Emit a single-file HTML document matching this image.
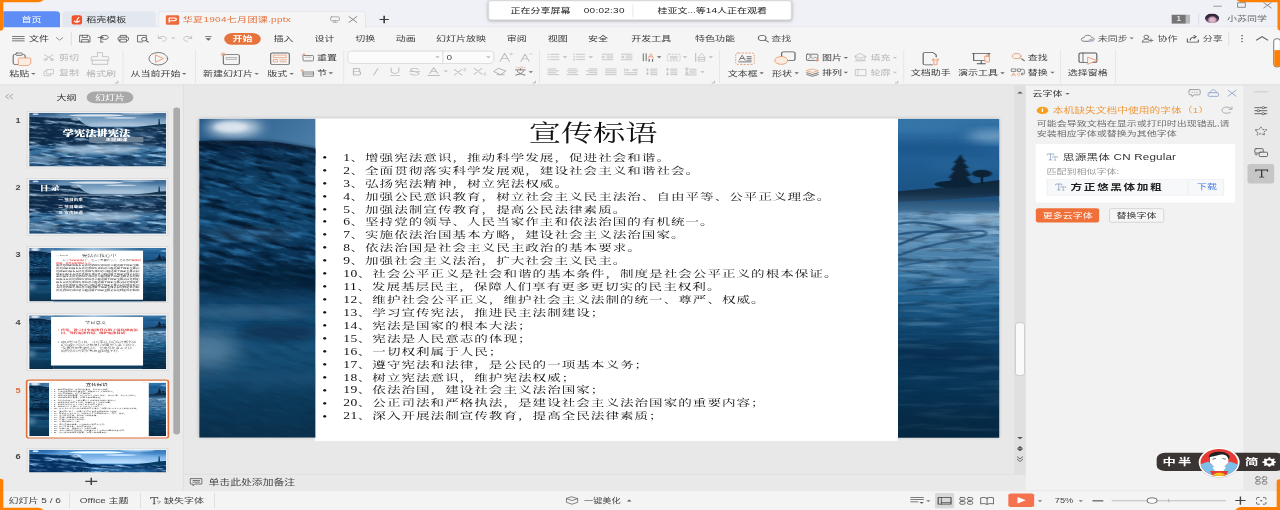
<!DOCTYPE html>
<html lang="zh-CN"><head><meta charset="utf-8"><title>华夏1904七月团课.pptx - WPS 演示</title>
<style>
html,body{margin:0;padding:0;background:#f0f0f0;overflow:hidden;}
body{width:1280px;height:510px;position:relative;}
#w{text-spacing-trim:space-all;position:absolute;left:0;top:0;width:1536px;height:864px;transform-origin:0 0;transform:scale(0.833333,0.590278);overflow:hidden;font-family:"Liberation Sans","Noto Sans CJK SC",sans-serif;font-size:12px;background:#f0f0f0;}
#w div,#w svg{position:absolute;box-sizing:border-box;}
#w svg{overflow:visible;text-rendering:geometricPrecision;}
.t{white-space:nowrap;}
.s{white-space:nowrap;font-family:"Liberation Serif","Noto Serif CJK SC",serif;}
</style></head><body><div id="w">
<div style="left:0.0px;top:0.0px;width:1536.0px;height:46.08px;background:#f0f1f6;"></div>
<div style="left:0.0px;top:45.06px;width:1536.0px;height:1.19px;background:#dde2ec;"></div>
<div style="left:0.0px;top:46.08px;width:1536.0px;height:96.56px;background:#f5f5f5;"></div>
<div style="left:0.0px;top:142.64px;width:1536.0px;height:4.75px;background:linear-gradient(#dcdcdc,#e9e9e9);"></div>
<div style="left:0.0px;top:144.85px;width:219.96px;height:686.28px;background:#ebebeb;"></div>
<div style="left:219.6px;top:144.85px;width:0.96px;height:686.28px;background:#d9d9d9;"></div>
<div style="left:220.56px;top:144.85px;width:996.24px;height:658.16px;background:#e8e8e8;"></div>
<div style="left:220.56px;top:803.35px;width:1010.04px;height:27.78px;background:#e9e9e9;border-top:1px solid #dadada;"></div>
<div style="left:1216.8px;top:144.85px;width:13.8px;height:658.16px;background:#e0e0e0;"></div>
<div style="left:1217.52px;top:546.18px;width:12.48px;height:91.32px;background:#fafafa;border:1px solid #bdbdbd;border-radius:6px;"></div>
<div style="left:1230.6px;top:144.85px;width:261.24px;height:686.28px;background:#f2f2f2;"></div>
<div style="left:1491.84px;top:144.85px;width:44.16px;height:686.28px;background:#e9e9e9;"></div>
<div style="left:0.0px;top:831.13px;width:1536.0px;height:32.87px;background:#f4f4f4;border-top:1px solid #e2e2e2;"></div>
<div style="left:3.72px;top:18.64px;width:68.28px;height:27.44px;background:#5e8df5;border-radius:0 5px 0 0;"></div>
<div class="t" style="top:24.37px;line-height:18.0px;font-size:12px;color:#fff;left:37.8px;transform:translateX(-50%);">首页</div>
<div style="left:74.52px;top:19.14px;width:112.68px;height:26.94px;background:#e3e7f0;border-radius:5px 5px 0 0;"></div>
<div class="t" style="top:24.54px;line-height:18.0px;font-size:12px;color:#333;left:103.56px;">稻壳模板</div>
<div style="left:190.2px;top:19.14px;width:248.4px;height:27.62px;background:#f5f5f5;border:1px solid #d9dde6;border-bottom:none;border-radius:5px 5px 0 0;"></div>
<div class="t" style="top:24.88px;line-height:18.0px;font-size:12px;color:#e5703a;letter-spacing:0.35px;left:219.36px;">华夏1904七月团课.pptx</div>
<div style="left:585.6px;top:1.19px;width:363.96px;height:32.69px;background:#fff;border:1px solid #e0e0e0;border-radius:4px;box-shadow:0 1px 5px rgba(0,0,0,.3);"></div>
<div class="t" style="top:8.79px;line-height:18.0px;font-size:12px;color:#1a1a1a;left:612.6px;">正在分享屏幕</div>
<div class="t" style="top:8.79px;line-height:18.0px;font-size:12px;color:#1a1a1a;letter-spacing:0.3px;left:700.56px;">00:02:30</div>
<div style="left:758.64px;top:6.78px;width:0.84px;height:22.02px;background:#e4e4e4;"></div>
<div class="t" style="top:8.79px;line-height:18.0px;font-size:12px;color:#1a1a1a;left:789.0px;">桂亚文...等14人正在观看</div>
<div style="left:1406.4px;top:25.07px;width:16.56px;height:15.08px;background:#757575;"></div>
<div class="t" style="top:24.45px;line-height:16.5px;font-size:11px;color:#fff;left:1414.68px;transform:translateX(-50%);">1</div>
<div style="left:1423.44px;top:25.07px;width:4.08px;height:15.08px;background:#b9b9b9;"></div>
<div style="left:1437.72px;top:22.02px;width:0.84px;height:19.49px;background:#d8dbe3;"></div>
<div style="left:1446.24px;top:23.21px;width:16.92px;height:16.26px;background:radial-gradient(ellipse 34% 40% at 52% 66%,#e3c3d1 0,#d3a9bd 70%,rgba(211,169,189,0) 100%),linear-gradient(#2c2233 0,#3a2b45 45%,#5d4566 70%,#8a6f93 100%);border-radius:50%;"></div>
<div class="t" style="top:23.02px;line-height:18.0px;font-size:12px;color:#6a6a6a;left:1472.4px;">小苏同学</div>
<div class="t" style="top:56.9px;line-height:18.0px;font-size:12px;color:#3c3c3c;left:34.8px;">文件</div>
<div style="left:84.6px;top:54.21px;width:0.96px;height:22.87px;background:#d9d9d9;"></div>
<div style="left:269.4px;top:55.57px;width:43.56px;height:20.5px;background:#e6733c;border-radius:12px;"></div>
<div class="t" style="top:56.9px;line-height:18.0px;font-size:12px;color:#fff;font-weight:700;left:291.12px;transform:translateX(-50%);">开始</div>
<div class="t" style="top:56.9px;line-height:18.0px;font-size:12px;color:#3c3c3c;left:328.2px;">插入</div>
<div class="t" style="top:56.9px;line-height:18.0px;font-size:12px;color:#3c3c3c;left:377.4px;">设计</div>
<div class="t" style="top:56.9px;line-height:18.0px;font-size:12px;color:#3c3c3c;left:426.36px;">切换</div>
<div class="t" style="top:56.9px;line-height:18.0px;font-size:12px;color:#3c3c3c;left:474.96px;">动画</div>
<div class="t" style="top:56.9px;line-height:18.0px;font-size:12px;color:#3c3c3c;left:523.2px;">幻灯片放映</div>
<div class="t" style="top:56.9px;line-height:18.0px;font-size:12px;color:#3c3c3c;left:608.16px;">审阅</div>
<div class="t" style="top:56.9px;line-height:18.0px;font-size:12px;color:#3c3c3c;left:657.36px;">视图</div>
<div class="t" style="top:56.9px;line-height:18.0px;font-size:12px;color:#3c3c3c;left:705.6px;">安全</div>
<div class="t" style="top:56.9px;line-height:18.0px;font-size:12px;color:#3c3c3c;left:757.56px;">开发工具</div>
<div class="t" style="top:56.9px;line-height:18.0px;font-size:12px;color:#3c3c3c;left:834.0px;">特色功能</div>
<div class="t" style="top:56.9px;line-height:18.0px;font-size:12px;color:#555;left:925.56px;">查找</div>
<div class="t" style="top:56.9px;line-height:18.0px;font-size:12px;color:#555;left:1317.36px;">未同步</div>
<div class="t" style="top:56.9px;line-height:18.0px;font-size:12px;color:#555;left:1389.12px;">协作</div>
<div class="t" style="top:56.9px;line-height:18.0px;font-size:12px;color:#555;left:1443.36px;">分享</div>
<div style="left:1474.2px;top:54.21px;width:0.84px;height:22.87px;background:#dcdcdc;"></div>
<div class="t" style="top:115.01px;line-height:18.0px;font-size:12px;color:#3c3c3c;left:11.04px;">粘贴</div>
<div class="t" style="top:88.58px;line-height:18.0px;font-size:12px;color:#b4b4b4;left:70.8px;">剪切</div>
<div class="t" style="top:113.99px;line-height:18.0px;font-size:12px;color:#b4b4b4;left:70.8px;">复制</div>
<div class="t" style="top:115.01px;line-height:18.0px;font-size:12px;color:#b4b4b4;left:103.2px;">格式刷</div>
<div class="t" style="top:115.01px;line-height:18.0px;font-size:12px;color:#3c3c3c;left:156.72px;">从当前开始</div>
<div class="t" style="top:115.01px;line-height:18.0px;font-size:12px;color:#3c3c3c;left:243.6px;">新建幻灯片</div>
<div class="t" style="top:115.01px;line-height:18.0px;font-size:12px;color:#3c3c3c;left:320.64px;">版式</div>
<div class="t" style="top:88.58px;line-height:18.0px;font-size:12px;color:#3c3c3c;left:380.4px;">重置</div>
<div class="t" style="top:114.33px;line-height:18.0px;font-size:12px;color:#3c3c3c;left:380.4px;">节</div>
<div class="t" style="top:114.67px;line-height:18.0px;font-size:12px;color:#3c3c3c;left:873.36px;">文本框</div>
<div class="t" style="top:114.67px;line-height:18.0px;font-size:12px;color:#3c3c3c;left:926.4px;">形状</div>
<div class="t" style="top:88.58px;line-height:18.0px;font-size:12px;color:#3c3c3c;left:986.28px;">图片</div>
<div class="t" style="top:113.99px;line-height:18.0px;font-size:12px;color:#3c3c3c;left:986.28px;">排列</div>
<div class="t" style="top:88.58px;line-height:18.0px;font-size:12px;color:#b4b4b4;left:1044.72px;">填充</div>
<div class="t" style="top:113.99px;line-height:18.0px;font-size:12px;color:#b4b4b4;left:1044.72px;">轮廓</div>
<div class="t" style="top:114.33px;line-height:18.0px;font-size:12px;color:#3c3c3c;left:1092.96px;">文档助手</div>
<div class="t" style="top:114.33px;line-height:18.0px;font-size:12px;color:#3c3c3c;left:1149.72px;">演示工具</div>
<div class="t" style="top:88.92px;line-height:18.0px;font-size:12px;color:#3c3c3c;left:1233.36px;">查找</div>
<div class="t" style="top:113.99px;line-height:18.0px;font-size:12px;color:#3c3c3c;left:1233.36px;">替换</div>
<div class="t" style="top:114.33px;line-height:18.0px;font-size:12px;color:#3c3c3c;left:1281.36px;">选择窗格</div>
<div style="left:146.94px;top:84.71px;width:0.84px;height:55.9px;background:#e3e3e3;"></div>
<div style="left:233.82px;top:84.71px;width:0.84px;height:55.9px;background:#e3e3e3;"></div>
<div style="left:411.54px;top:84.71px;width:0.84px;height:55.9px;background:#e3e3e3;"></div>
<div style="left:647.1px;top:84.71px;width:0.84px;height:55.9px;background:#e3e3e3;"></div>
<div style="left:863.34px;top:84.71px;width:0.84px;height:55.9px;background:#e3e3e3;"></div>
<div style="left:1084.14px;top:84.71px;width:0.84px;height:55.9px;background:#e3e3e3;"></div>
<div style="left:1271.94px;top:84.71px;width:0.84px;height:55.9px;background:#e3e3e3;"></div>
<div style="left:1338.18px;top:84.71px;width:0.84px;height:55.9px;background:#e3e3e3;"></div>
<div style="left:416.64px;top:85.55px;width:176.64px;height:22.2px;background:#fbfbfb;border:1px solid #d3d3d3;border-radius:6px;"></div>
<div style="left:531.36px;top:86.06px;width:0.84px;height:21.35px;background:#d3d3d3;"></div>
<div class="t" style="top:87.9px;line-height:18.0px;font-size:12px;color:#444;left:535.68px;">0</div>
<div class="t" style="top:156.85px;line-height:18.0px;font-size:12px;color:#333;left:67.8px;">大纲</div>
<div style="left:104.16px;top:155.01px;width:55.92px;height:19.82px;background:#a9a9a9;border-radius:12px;"></div>
<div class="t" style="top:156.18px;line-height:18.0px;font-size:12px;color:#fff;left:132.12px;transform:translateX(-50%);">幻灯片</div>
<div style="left:208.32px;top:182.12px;width:7.2px;height:553.97px;background:#ababab;border-radius:4px;"></div>
<div class="t" style="top:807.49px;line-height:19.5px;font-size:13px;color:#444;left:250.2px;">单击此处添加备注</div>
<div class="t" style="top:838.91px;line-height:18.0px;font-size:12px;color:#444;left:10.32px;">幻灯片 5 / 6</div>
<div class="t" style="top:838.91px;line-height:18.0px;font-size:12px;color:#444;left:95.76px;">Office 主题</div>
<div class="t" style="top:838.91px;line-height:18.0px;font-size:12px;color:#444;left:196.68px;">缺失字体</div>
<div style="left:83.46px;top:835.2px;width:0.84px;height:26.26px;background:#dcdcdc;"></div>
<div style="left:167.7px;top:835.2px;width:0.84px;height:26.26px;background:#dcdcdc;"></div>
<div style="left:256.74px;top:835.2px;width:0.84px;height:26.26px;background:#dcdcdc;"></div>
<div class="t" style="top:840.16px;line-height:16.5px;font-size:11px;color:#444;left:700.8px;">一键美化</div>
<div class="t" style="top:839.83px;line-height:16.5px;font-size:11px;color:#444;left:1265.76px;">75%</div>
<div style="left:1122.24px;top:834.86px;width:22.8px;height:25.75px;background:#d8d8d8;border-radius:2px;"></div>
<div style="left:1209.84px;top:836.39px;width:30.96px;height:22.53px;background:#f6714e;border-radius:3px;"></div>
<div style="left:1333.68px;top:847.74px;width:137.04px;height:1.01px;background:#9a9a9a;"></div>
<div style="left:1401.6px;top:845.03px;width:0.84px;height:6.43px;background:#aaa;"></div>
<div style="left:1376.4px;top:842.82px;width:12.24px;height:10.68px;background:#fafafa;border:1.4px solid #555;border-radius:50%;"></div>
<div class="t" style="top:149.57px;line-height:18.0px;font-size:12px;color:#333;left:1238.88px;">云字体</div>
<div style="left:1244.04px;top:180.59px;width:13.8px;height:12.37px;background:#f6a01e;border-radius:50%;"></div>
<div class="t" style="top:179.36px;line-height:15.0px;font-size:10px;color:#fff;font-weight:700;left:1250.94px;transform:translateX(-50%);">i</div>
<div class="t" style="top:177.35px;line-height:19.35px;font-size:12.9px;color:#f09a3e;left:1263.36px;">本机缺失文档中使用的字体（1）</div>
<div class="t" style="top:201.41px;line-height:18.0px;font-size:12px;color:#6e6e6e;left:1244.04px;">可能会导致文档在显示或打印时出现错乱,请</div>
<div class="t" style="top:217.0px;line-height:18.0px;font-size:12px;color:#6e6e6e;left:1244.04px;">安装相应字体或替换为其他字体</div>
<div style="left:1243.32px;top:244.46px;width:238.44px;height:98.43px;background:#fff;"></div>
<div class="t" style="top:256.49px;line-height:21.0px;font-size:14px;color:#333;letter-spacing:0.2px;left:1275.36px;">思源黑体 CN Regular</div>
<div class="t" style="top:281.03px;line-height:18.0px;font-size:12px;color:#9a9a9a;left:1255.8px;">匹配到相似字体:</div>
<div style="left:1255.8px;top:304.09px;width:213.48px;height:26.6px;background:#f7f8fa;border:1px solid #ececf0;"></div>
<div style="left:1425.36px;top:304.94px;width:0.84px;height:25.07px;background:#ececf0;"></div>
<div class="t" style="top:307.15px;line-height:21.0px;font-size:14px;color:#222;font-weight:700;letter-spacing:1.9px;left:1284.72px;">方正悠黑体加粗</div>
<div class="t" style="top:308.31px;line-height:18.0px;font-size:12px;color:#4a7fe0;left:1436.52px;">下载</div>
<div style="left:1243.32px;top:353.05px;width:76.08px;height:24.06px;background:#f0703a;border-radius:3px;"></div>
<div class="t" style="top:356.42px;line-height:18.0px;font-size:12px;color:#fff;left:1281.36px;transform:translateX(-50%);">更多云字体</div>
<div style="left:1331.04px;top:353.05px;width:65.52px;height:24.06px;background:#f6f6f6;border:1px solid #c9c9c9;border-radius:3px;"></div>
<div class="t" style="top:356.42px;line-height:18.0px;font-size:12px;color:#333;left:1363.8px;transform:translateX(-50%);">替换字体</div>
<div style="left:1496.76px;top:278.17px;width:32.64px;height:32.36px;background:#c6c6c6;border-radius:4px;"></div>
<div style="left:1388.16px;top:767.44px;width:152.64px;height:30.15px;background:#3a3533;border-radius:10px;"></div>
<div class="t" style="top:770.34px;line-height:24.0px;font-size:16px;color:#fff;font-weight:700;letter-spacing:2.6px;left:1395.0px;">中半</div>
<div class="t" style="top:770.34px;line-height:24.0px;font-size:16px;color:#fff;font-weight:700;left:1494.0px;">简</div>
<div style="left:-4.8px;top:-6.78px;width:57.36px;height:10.51px;background:#ff8000;border-radius:0 0 8px 0;"></div>
<div style="left:-4.8px;top:-6.78px;width:8.64px;height:58.28px;background:#ff8000;border-radius:0 0 4px 0;"></div>
<div style="left:1483.44px;top:-6.78px;width:57.36px;height:11.18px;background:#ff8000;border-radius:0 0 0 8px;"></div>
<div style="left:1532.64px;top:-6.78px;width:8.16px;height:58.28px;background:#ff8000;border-radius:0 0 0 4px;"></div>
<div style="left:-4.8px;top:810.8px;width:8.76px;height:59.98px;background:#ff8000;border-radius:0 4px 0 0;"></div>
<div style="left:-4.8px;top:860.27px;width:57.48px;height:10.51px;background:#ff8000;border-radius:0 8px 0 0;"></div>
<div style="left:1532.16px;top:811.65px;width:8.64px;height:59.13px;background:#ff8000;border-radius:4px 0 0 0;"></div>
<div style="left:1482.36px;top:858.58px;width:58.44px;height:12.2px;background:#ff8000;border-radius:8px 0 0 0;"></div>
<div style="left:1527.6px;top:65.05px;width:9.6px;height:49.3px;background:#fff;border:1.5px solid #444;border-radius:5px;overflow:hidden;"><div style="left:0;right:0;top:40%;bottom:0;background:#ff8000;width:100%"></div></div>
<div style="left:238.56px;top:200.58px;width:960.36px;height:540.6px;background:#fff;box-shadow:0 0 6px rgba(0,0,0,.28);"></div>
<div style="left:378.0px;top:200.58px;width:698.88px;height:546.36px;background:#fff;"></div>
<div class="s" style="top:198.06px;line-height:57.9px;font-size:38.6px;color:#111;left:711.72px;transform:translateX(-50%);">宣传标语</div>
<div class="s" style="top:254.92px;line-height:25.5px;font-size:17px;color:#111;left:386.76px;">•</div>
<div class="s" style="top:255.45px;line-height:24.45px;font-size:16.3px;color:#111;letter-spacing:1.2px;left:411.84px;"><span style="letter-spacing:0.6px">1</span>、增强宪法意识，推动科学发展，促进社会和谐。</div>
<div class="s" style="top:276.81px;line-height:25.5px;font-size:17px;color:#111;left:386.76px;">•</div>
<div class="s" style="top:277.33px;line-height:24.45px;font-size:16.3px;color:#111;letter-spacing:1.2px;left:411.84px;"><span style="letter-spacing:0.6px">2</span>、全面贯彻落实科学发展观，建设社会主义和谐社会。</div>
<div class="s" style="top:298.7px;line-height:25.5px;font-size:17px;color:#111;left:386.76px;">•</div>
<div class="s" style="top:299.22px;line-height:24.45px;font-size:16.3px;color:#111;letter-spacing:1.2px;left:411.84px;"><span style="letter-spacing:0.6px">3</span>、弘扬宪法精神，树立宪法权威。</div>
<div class="s" style="top:320.58px;line-height:25.5px;font-size:17px;color:#111;left:386.76px;">•</div>
<div class="s" style="top:321.1px;line-height:24.45px;font-size:16.3px;color:#111;letter-spacing:1.2px;left:411.84px;"><span style="letter-spacing:0.6px">4</span>、加强公民意识教育，树立社会主义民主法治、自由平等、公平正义理念。</div>
<div class="s" style="top:342.47px;line-height:25.5px;font-size:17px;color:#111;left:386.76px;">•</div>
<div class="s" style="top:343.0px;line-height:24.45px;font-size:16.3px;color:#111;letter-spacing:1.2px;left:411.84px;"><span style="letter-spacing:0.6px">5</span>、加强法制宣传教育，提高公民法律素质。</div>
<div class="s" style="top:364.36px;line-height:25.5px;font-size:17px;color:#111;left:386.76px;">•</div>
<div class="s" style="top:364.88px;line-height:24.45px;font-size:16.3px;color:#111;letter-spacing:1.2px;left:411.84px;"><span style="letter-spacing:0.6px">6</span>、坚持党的领导、人民当家作主和依法治国的有机统一。</div>
<div class="s" style="top:386.25px;line-height:25.5px;font-size:17px;color:#111;left:386.76px;">•</div>
<div class="s" style="top:386.77px;line-height:24.45px;font-size:16.3px;color:#111;letter-spacing:1.2px;left:411.84px;"><span style="letter-spacing:0.6px">7</span>、实施依法治国基本方略，建设社会主义法治国家。</div>
<div class="s" style="top:408.14px;line-height:25.5px;font-size:17px;color:#111;left:386.76px;">•</div>
<div class="s" style="top:408.66px;line-height:24.45px;font-size:16.3px;color:#111;letter-spacing:1.2px;left:411.84px;"><span style="letter-spacing:0.6px">8</span>、依法治国是社会主义民主政治的基本要求。</div>
<div class="s" style="top:430.02px;line-height:25.5px;font-size:17px;color:#111;left:386.76px;">•</div>
<div class="s" style="top:430.54px;line-height:24.45px;font-size:16.3px;color:#111;letter-spacing:1.2px;left:411.84px;"><span style="letter-spacing:0.6px">9</span>、加强社会主义法治，扩大社会主义民主。</div>
<div class="s" style="top:451.91px;line-height:25.5px;font-size:17px;color:#111;left:386.76px;">•</div>
<div class="s" style="top:452.44px;line-height:24.45px;font-size:16.3px;color:#111;letter-spacing:1.2px;left:411.84px;"><span style="letter-spacing:0.6px">10</span>、社会公平正义是社会和谐的基本条件，制度是社会公平正义的根本保证。</div>
<div class="s" style="top:473.8px;line-height:25.5px;font-size:17px;color:#111;left:386.76px;">•</div>
<div class="s" style="top:474.32px;line-height:24.45px;font-size:16.3px;color:#111;letter-spacing:1.2px;left:411.84px;"><span style="letter-spacing:0.6px">11</span>、发展基层民主，保障人们享有更多更切实的民主权利。</div>
<div class="s" style="top:495.69px;line-height:25.5px;font-size:17px;color:#111;left:386.76px;">•</div>
<div class="s" style="top:496.21px;line-height:24.45px;font-size:16.3px;color:#111;letter-spacing:1.2px;left:411.84px;"><span style="letter-spacing:0.6px">12</span>、维护社会公平正义，维护社会主义法制的统一、尊严、权威。</div>
<div class="s" style="top:517.58px;line-height:25.5px;font-size:17px;color:#111;left:386.76px;">•</div>
<div class="s" style="top:518.11px;line-height:24.45px;font-size:16.3px;color:#111;letter-spacing:1.2px;left:411.84px;"><span style="letter-spacing:0.6px">13</span>、学习宣传宪法，推进民主法制建设；</div>
<div class="s" style="top:539.46px;line-height:25.5px;font-size:17px;color:#111;left:386.76px;">•</div>
<div class="s" style="top:539.99px;line-height:24.45px;font-size:16.3px;color:#111;letter-spacing:1.2px;left:411.84px;"><span style="letter-spacing:0.6px">14</span>、宪法是国家的根本大法；</div>
<div class="s" style="top:561.35px;line-height:25.5px;font-size:17px;color:#111;left:386.76px;">•</div>
<div class="s" style="top:561.88px;line-height:24.45px;font-size:16.3px;color:#111;letter-spacing:1.2px;left:411.84px;"><span style="letter-spacing:0.6px">15</span>、宪法是人民意志的体现；</div>
<div class="s" style="top:583.24px;line-height:25.5px;font-size:17px;color:#111;left:386.76px;">•</div>
<div class="s" style="top:583.76px;line-height:24.45px;font-size:16.3px;color:#111;letter-spacing:1.2px;left:411.84px;"><span style="letter-spacing:0.6px">16</span>、一切权利属于人民；</div>
<div class="s" style="top:605.13px;line-height:25.5px;font-size:17px;color:#111;left:386.76px;">•</div>
<div class="s" style="top:605.65px;line-height:24.45px;font-size:16.3px;color:#111;letter-spacing:1.2px;left:411.84px;"><span style="letter-spacing:0.6px">17</span>、遵守宪法和法律，是公民的一项基本义务；</div>
<div class="s" style="top:627.02px;line-height:25.5px;font-size:17px;color:#111;left:386.76px;">•</div>
<div class="s" style="top:627.54px;line-height:24.45px;font-size:16.3px;color:#111;letter-spacing:1.2px;left:411.84px;"><span style="letter-spacing:0.6px">18</span>、树立宪法意识，维护宪法权威；</div>
<div class="s" style="top:648.9px;line-height:25.5px;font-size:17px;color:#111;left:386.76px;">•</div>
<div class="s" style="top:649.42px;line-height:24.45px;font-size:16.3px;color:#111;letter-spacing:1.2px;left:411.84px;"><span style="letter-spacing:0.6px">19</span>、依法治国，建设社会主义法治国家；</div>
<div class="s" style="top:670.79px;line-height:25.5px;font-size:17px;color:#111;left:386.76px;">•</div>
<div class="s" style="top:671.31px;line-height:24.45px;font-size:16.3px;color:#111;letter-spacing:1.2px;left:411.84px;"><span style="letter-spacing:0.6px">20</span>、公正司法和严格执法，是建设社会主义法治国家的重要内容；</div>
<div class="s" style="top:692.68px;line-height:25.5px;font-size:17px;color:#111;left:386.76px;">•</div>
<div class="s" style="top:693.2px;line-height:24.45px;font-size:16.3px;color:#111;letter-spacing:1.2px;left:411.84px;"><span style="letter-spacing:0.6px">21</span>、深入开展法制宣传教育，提高全民法律素质；</div>

<svg width="0" height="0" style="left:0;top:0"><defs>
<filter id="nzW" x="0" y="0" width="100%" height="100%" color-interpolation-filters="sRGB">
 <feTurbulence type="fractalNoise" baseFrequency="0.034 0.13" numOctaves="4" seed="7"/>
 <feColorMatrix type="matrix" values="0 0 0 0 0.2  0 0 0 0 0.5  0 0 0 0 0.72  3.4 0 0 0 -1.62"/>
 <feComposite in2="SourceGraphic" operator="in"/>
</filter>
<filter id="nzD" x="0" y="0" width="100%" height="100%" color-interpolation-filters="sRGB">
 <feTurbulence type="fractalNoise" baseFrequency="0.028 0.11" numOctaves="4" seed="23"/>
 <feColorMatrix type="matrix" values="0 0 0 0 0.01  0 0 0 0 0.08  0 0 0 0 0.16  -3.6 0 0 0 1.85"/>
 <feComposite in2="SourceGraphic" operator="in"/>
</filter>
<filter id="nzF" x="0" y="0" width="100%" height="100%" color-interpolation-filters="sRGB">
 <feTurbulence type="fractalNoise" baseFrequency="0.012 0.1" numOctaves="3" seed="11"/>
 <feColorMatrix type="matrix" values="0 0 0 0 0.72  0 0 0 0 0.86  0 0 0 0 0.96  3.5 0 0 0 -1.75"/>
 <feComposite in2="SourceGraphic" operator="in"/>
</filter>
<filter id="nzAW" x="0" y="0" width="100%" height="100%" color-interpolation-filters="sRGB">
 <feTurbulence type="fractalNoise" baseFrequency="0.009 0.04" numOctaves="4" seed="5"/>
 <feColorMatrix type="matrix" values="0 0 0 0 0.70  0 0 0 0 0.83  0 0 0 0 0.94  3.4 0 0 0 -1.62"/>
 <feComposite in2="SourceGraphic" operator="in"/>
</filter>
<filter id="nzAD" x="0" y="0" width="100%" height="100%" color-interpolation-filters="sRGB">
 <feTurbulence type="fractalNoise" baseFrequency="0.008 0.036" numOctaves="4" seed="31"/>
 <feColorMatrix type="matrix" values="0 0 0 0 0.04  0 0 0 0 0.15  0 0 0 0 0.27  -3.4 0 0 0 1.8"/>
 <feComposite in2="SourceGraphic" operator="in"/>
</filter>
<filter id="b8" x="-30%" y="-30%" width="160%" height="160%"><feGaussianBlur stdDeviation="8"/></filter>
<filter id="b14" x="-40%" y="-40%" width="180%" height="180%"><feGaussianBlur stdDeviation="14"/></filter>
<filter id="b3" x="-30%" y="-30%" width="160%" height="160%"><feGaussianBlur stdDeviation="3"/></filter>
<filter id="b1" x="-10%" y="-10%" width="120%" height="120%"><feGaussianBlur stdDeviation="1.2"/></filter>
<linearGradient id="gL" gradientUnits="userSpaceOnUse" x1="0" y1="0" x2="0" y2="540">
 <stop offset=".07" stop-color="#08223e"/><stop offset=".1" stop-color="#0b2d4e"/><stop offset=".16" stop-color="#0e3a5e"/>
 <stop offset=".26" stop-color="#10436a"/><stop offset=".35" stop-color="#0e3d62"/><stop offset=".43" stop-color="#0b3356"/>
 <stop offset=".48" stop-color="#062641"/><stop offset=".52" stop-color="#072945"/><stop offset=".57" stop-color="#0f4066"/><stop offset=".63" stop-color="#124a72"/>
 <stop offset=".71" stop-color="#165078"/><stop offset=".79" stop-color="#12476c"/><stop offset=".88" stop-color="#0c3a5a"/><stop offset="1" stop-color="#0a304c"/>
</linearGradient>
<linearGradient id="gLs" x1="0" y1="0" x2="1" y2="0.3">
 <stop offset="0" stop-color="#245888"/><stop offset="1" stop-color="#4f81aa"/>
</linearGradient>
<linearGradient id="gLm" gradientUnits="userSpaceOnUse" x1="0" y1="0" x2="0" y2="540">
 <stop offset="0" stop-color="#fff"/><stop offset=".42" stop-color="#fff"/><stop offset=".56" stop-color="#333"/><stop offset="1" stop-color="#1a1a1a"/>
</linearGradient>
<mask id="mkL" maskUnits="userSpaceOnUse" x="-200" y="-100" width="700" height="800"><rect x="-200" y="-100" width="700" height="800" fill="url(#gLm)"/></mask>
<linearGradient id="gRs" x1="0" y1="0" x2="0" y2="1">
 <stop offset="0" stop-color="#3373a5"/><stop offset=".3" stop-color="#24629a"/><stop offset=".75" stop-color="#1c5688"/><stop offset="1" stop-color="#1b4f7c"/>
</linearGradient>
<linearGradient id="gRw" gradientUnits="userSpaceOnUse" x1="0" y1="140" x2="0" y2="540">
 <stop offset="0" stop-color="#2c567a"/><stop offset=".035" stop-color="#3a6990"/><stop offset=".055" stop-color="#6595ba"/><stop offset=".15" stop-color="#5a8db4"/><stop offset=".28" stop-color="#417aa5"/>
 <stop offset=".4" stop-color="#22618f"/><stop offset=".52" stop-color="#124a74"/><stop offset=".68" stop-color="#0b3b60"/><stop offset=".85" stop-color="#07304f"/><stop offset="1" stop-color="#052741"/>
</linearGradient>
<linearGradient id="gRm" gradientUnits="userSpaceOnUse" x1="0" y1="140" x2="0" y2="540">
 <stop offset="0" stop-color="#fff"/><stop offset=".3" stop-color="#ddd"/><stop offset=".6" stop-color="#555"/><stop offset="1" stop-color="#2a2a2a"/>
</linearGradient>
<mask id="mkR" maskUnits="userSpaceOnUse" x="780" y="100" width="200" height="460"><rect x="780" y="100" width="200" height="460" fill="url(#gRm)"/></mask>
<linearGradient id="gRl" x1="0" y1="0" x2="0" y2="1">
 <stop offset="0" stop-color="#0c2539"/><stop offset=".5" stop-color="#143049"/><stop offset="1" stop-color="#2f5676"/>
</linearGradient>
<linearGradient id="gAs" x1="0" y1="0" x2="0" y2="1">
 <stop offset="0" stop-color="#5580a8"/><stop offset=".5" stop-color="#7fa3c4"/><stop offset="1" stop-color="#a5c0d8"/>
</linearGradient>
<linearGradient id="gAw" gradientUnits="userSpaceOnUse" x1="0" y1="140" x2="0" y2="540">
 <stop offset="0" stop-color="#3a75a6"/><stop offset=".2" stop-color="#2a6394"/><stop offset=".42" stop-color="#1b4f7e"/><stop offset=".6" stop-color="#3a72a0"/><stop offset=".78" stop-color="#2a608e"/><stop offset="1" stop-color="#1a4a76"/>
</linearGradient>
<clipPath id="cpL"><rect x="0" y="0" width="170" height="540"/></clipPath>
<clipPath id="cpLw"><path d="M0 38 C30 37 60 37 86 39 C115 43 145 52 170 60 L170 540 L0 540Z"/></clipPath>
<clipPath id="cpR"><rect x="790" y="0" width="170" height="540"/></clipPath>
<clipPath id="cpA"><rect x="0" y="0" width="960" height="540"/></clipPath>
<clipPath id="cpWave"><path d="M0 40 C80 48 200 46 285 56 C310 44 340 52 352 76 C372 106 402 132 440 146 L960 152 L960 540 L0 540Z"/></clipPath>

<g id="phB">
 <!-- left strip: breaking wave -->
 <g clip-path="url(#cpL)">
  <rect x="0" y="0" width="170" height="80" fill="url(#gLs)"/>
  <ellipse cx="42" cy="15" rx="32" ry="15" fill="#d6e2ed" opacity=".9" filter="url(#b8)"/>
  <ellipse cx="38" cy="14" rx="20" ry="9" fill="#f2f6fa" opacity=".55" filter="url(#b3)"/>
  <path d="M0 38 C30 37 60 37 86 39 C115 43 145 52 170 60 L170 540 L0 540Z" fill="url(#gL)"/>
  <g clip-path="url(#cpLw)"><g mask="url(#mkL)"><g transform="rotate(17 0 40)">
   <rect x="-120" y="-40" width="520" height="640" filter="url(#nzW)" opacity=".62"/>
   <rect x="-120" y="-40" width="520" height="640" filter="url(#nzD)" opacity=".85"/>
  </g></g></g>
  <path d="M0 37 C30 36 60 36 86 38 C115 42 145 51 170 59 L170 72 C150 62 130 58 110 52 C90 49 70 44 50 45 C30 44 15 45 0 48Z" fill="#071b33" opacity=".6" filter="url(#b3)"/>
  <ellipse cx="10" cy="392" rx="36" ry="32" fill="#7a9ab4" opacity=".6" filter="url(#b14)"/>
  <ellipse cx="50" cy="328" rx="90" ry="8" fill="#6a90b0" opacity=".45" filter="url(#b8)"/>
  <ellipse cx="95" cy="362" rx="50" ry="14" fill="#07223c" opacity=".55" filter="url(#b8)"/>
  <ellipse cx="80" cy="268" rx="120" ry="12" fill="#051b33" opacity=".55" filter="url(#b8)"/>
  <ellipse cx="60" cy="196" rx="60" ry="8" fill="#6e99bd" opacity=".3" filter="url(#b8)"/>
  <ellipse cx="90" cy="440" rx="110" ry="12" fill="#2a5f86" opacity=".35" filter="url(#b8)"/>
 </g>
 <!-- right strip: shore with trees -->
 <g clip-path="url(#cpR)">
  <rect x="790" y="0" width="170" height="150" fill="url(#gRs)"/>
  <ellipse cx="952" cy="30" rx="30" ry="10" fill="#8fb6d4" opacity=".75" filter="url(#b8)"/>
  <ellipse cx="880" cy="50" rx="70" ry="9" fill="#17507f" opacity=".6" filter="url(#b8)"/>
  <ellipse cx="860" cy="14" rx="60" ry="7" fill="#4a86b6" opacity=".5" filter="url(#b8)"/>
  <ellipse cx="930" cy="80" rx="60" ry="8" fill="#2f6ea2" opacity=".5" filter="url(#b8)"/>
  <rect x="790" y="140" width="170" height="402" fill="url(#gRw)"/>
  <g mask="url(#mkR)">
   <rect x="790" y="156" width="170" height="384" filter="url(#nzF)" opacity=".45"/>
   <rect x="790" y="156" width="170" height="384" filter="url(#nzD)" opacity=".38"/>
  </g>
  <path d="M790 132 L838 123 L893 116 L960 104 L960 131 L900 137 L838 141 L790 148Z" fill="url(#gRl)"/>
  <path d="M913.5 60 L916 68 L920 72 L917 74 L923 83 L919 85 L926 96 L921 98 L928 112 L896 114 L903 101 L899 100 L906 88 L902 87 L908 76 L905 74 L910 68Z" fill="#0a2034" filter="url(#b1)"/>
  <ellipse cx="939" cy="93" rx="12" ry="6.5" fill="#0a2034" filter="url(#b1)"/><rect x="937.5" y="94" width="3" height="17" fill="#0a2034"/>
  <ellipse cx="906" cy="111" rx="24" ry="6" fill="#0b2338"/>
  <path d="M838 178 C860 172 885 178 905 186 C880 190 860 200 838 214" stroke="#173f66" stroke-width="4" fill="none" opacity=".75" filter="url(#b1)"/>
  <path d="M838 196 C870 186 900 196 930 190 C945 188 950 196 935 200 C900 208 870 214 838 232" stroke="#1a4670" stroke-width="3.5" fill="none" opacity=".7" filter="url(#b1)"/>
  <path d="M840 250 C870 240 910 236 950 240" stroke="#1d4c76" stroke-width="3" fill="none" opacity=".6" filter="url(#b1)"/>
  <path d="M850 290 C880 284 900 288 925 284" stroke="#0f3a62" stroke-width="3" fill="none" opacity=".6" filter="url(#b1)"/>
  <ellipse cx="935" cy="170" rx="36" ry="6" fill="#a9c8e0" opacity=".55" filter="url(#b3)"/>
  <ellipse cx="880" cy="400" rx="80" ry="18" fill="#031c34" opacity=".5" filter="url(#b14)"/>
 </g>
</g>

<g id="phA">
 <g clip-path="url(#cpA)">
  <rect x="0" y="0" width="960" height="160" fill="url(#gAs)"/>
  <ellipse cx="40" cy="10" rx="170" ry="30" fill="#2a5783" opacity=".85" filter="url(#b14)"/>
  <ellipse cx="930" cy="20" rx="150" ry="30" fill="#3a6894" opacity=".8" filter="url(#b14)"/>
  <ellipse cx="470" cy="26" rx="190" ry="12" fill="#e4edf5" opacity=".9" filter="url(#b8)"/>
  <ellipse cx="640" cy="52" rx="110" ry="8" fill="#dde8f2" opacity=".8" filter="url(#b8)"/>
  <ellipse cx="760" cy="10" rx="120" ry="8" fill="#c9d9e8" opacity=".7" filter="url(#b8)"/>
  <ellipse cx="45" cy="14" rx="22" ry="9" fill="#e8f0f7" opacity=".8" filter="url(#b3)"/>
  <ellipse cx="620" cy="120" rx="200" ry="22" fill="#b9cee0" opacity=".7" filter="url(#b14)"/>
  <rect x="0" y="140" width="960" height="410" fill="url(#gAw)"/>
  <path d="M740 146 L830 132 L880 124 L905 118 L908 64 L914 64 L917 116 L960 112 L960 152 L740 152Z" fill="#10304c" filter="url(#b1)"/>
  <path d="M0 40 C80 48 200 46 285 56 C310 44 340 52 352 76 C372 106 402 132 440 146 L960 152 L960 330 L0 330Z" fill="#0f2e4e"/>
  <ellipse cx="330" cy="62" rx="34" ry="16" fill="#dfeaf4" opacity=".6" filter="url(#b8)"/>
  <g clip-path="url(#cpWave)">
   <g transform="rotate(9 0 100)"><rect x="-50" y="-60" width="1100" height="700" filter="url(#nzAW)" opacity=".85"/></g>
   <rect x="0" y="30" width="960" height="510" filter="url(#nzAD)" opacity=".85"/>
  </g>
  <ellipse cx="480" cy="370" rx="300" ry="44" fill="#bcd2e4" opacity=".7" filter="url(#b14)"/>
  <ellipse cx="700" cy="330" rx="200" ry="20" fill="#8fb0cc" opacity=".5" filter="url(#b14)"/>
  <ellipse cx="90" cy="470" rx="120" ry="36" fill="#9dbbd4" opacity=".5" filter="url(#b14)"/>
  <ellipse cx="650" cy="215" rx="260" ry="26" fill="#4a7ba5" opacity=".5" filter="url(#b14)"/>
  <ellipse cx="140" cy="230" rx="170" ry="60" fill="#0a2846" opacity=".5" filter="url(#b14)"/>
  <ellipse cx="600" cy="490" rx="300" ry="30" fill="#123a60" opacity=".5" filter="url(#b14)"/>
 </g>
</g>
</defs></svg>

<svg style="left:238.56px;top:200.58px;" width="960.36" height="540.6" viewBox="0 0 960 540" preserveAspectRatio="none"><defs><clipPath id="mL"><rect x="0" y="0" width="139.4" height="540"/></clipPath><clipPath id="mR"><rect x="838.3" y="0" width="121.7" height="540"/></clipPath></defs><g clip-path="url(#mL)"><use href="#phB"/></g><g clip-path="url(#mR)"><use href="#phB"/></g></svg>
<div style="left:0;top:0;width:1536px;height:864px;clip-path:inset(176.19px 1316.4px 64.03999999999996px 0)">
<div style="left:32.16px;top:188.39px;width:169.44px;height:96.39px;border:1px solid #d2d2d2;background:#f2f2f2;"></div>
<svg style="left:35.28px;top:191.27px;overflow:hidden;" width="164.4" height="90.97" viewBox="0 0 960 540" preserveAspectRatio="none"><use href="#phA"/></svg>
<div class="t" style="top:195.72px;line-height:16.5px;font-size:11px;color:#444;font-weight:700;left:21.6px;transform:translateX(-50%);">1</div>
<div class="s" style="top:216.03px;line-height:20.25px;font-size:13.5px;color:#fff;font-weight:900;left:115.92px;transform:translateX(-50%);text-shadow:0 0 1px #fff;">学宪法讲宪法</div>
<div style="left:107.16px;top:232.26px;width:64.44px;height:9.15px;background:#6d8196;"></div>
<div class="t" style="top:231.89px;line-height:9.9px;font-size:6.6px;color:#fff;font-weight:700;left:139.8px;transform:translateX(-50%);">主题团课</div>
<div style="left:32.16px;top:302.4px;width:169.44px;height:96.4px;border:1px solid #d2d2d2;background:#f2f2f2;"></div>
<svg style="left:35.28px;top:305.28px;overflow:hidden;" width="164.4" height="90.97" viewBox="0 0 960 540" preserveAspectRatio="none"><use href="#phA"/></svg>
<div class="t" style="top:309.74px;line-height:16.5px;font-size:11px;color:#444;font-weight:700;left:21.6px;transform:translateX(-50%);">2</div>
<div class="s" style="top:310.95px;line-height:15.75px;font-size:10.5px;color:#fff;font-weight:900;letter-spacing:3px;left:47.76px;">目录</div>
<div style="left:35.28px;top:330.01px;width:164.4px;height:1.36px;background:#eef3f8;"></div>
<div class="t" style="top:334.79px;line-height:8.4px;font-size:5.6px;color:#fff;font-weight:700;left:69.96px;">一  节日由来</div>
<div class="t" style="top:345.97px;line-height:8.4px;font-size:5.6px;color:#fff;font-weight:700;left:69.96px;">二  节日意义</div>
<div class="t" style="top:357.16px;line-height:8.4px;font-size:5.6px;color:#fff;font-weight:700;left:69.96px;">三  宣传标语</div>
<div style="left:32.16px;top:417.09px;width:169.44px;height:96.4px;border:1px solid #d2d2d2;background:#f2f2f2;"></div>
<svg style="left:35.28px;top:419.97px;overflow:hidden;" width="164.4" height="90.98" viewBox="0 0 960 540" preserveAspectRatio="none"><use href="#phB"/><defs><linearGradient id="tb"><stop offset="0" stop-color="#3a75a5"/><stop offset=".45" stop-color="#9dbdd8"/><stop offset="1" stop-color="#2c6a9a"/></linearGradient></defs><rect x="168" y="0" width="624" height="40" fill="url(#tb)"/><rect x="168" y="490" width="624" height="50" fill="#0e3b5e"/><rect x="153.5" y="27" width="644.5" height="494" fill="#fff"/><text x="490" y="93" font-size="40" text-anchor="middle" fill="#222" font-family="'Liberation Serif','Noto Serif CJK SC',serif">宪法在我心中</text><text x="186" y="86" font-size="14" fill="#555" font-family="'Liberation Sans','Noto Sans CJK SC',sans-serif">——主题团课</text><text x="232" y="131" font-size="22" fill="#444" font-family="'Liberation Serif','Noto Serif CJK SC',serif">每年<tspan fill="#e02020" font-weight="700">"国家宪法日"</tspan>，是一个重要的节点，是难得的<tspan fill="#e02020" font-weight="700">普法良</tspan></text><text x="188" y="158" font-size="22" fill="#e02020" font-weight="700" font-family="'Liberation Serif','Noto Serif CJK SC',serif">好机，也是最好的切入点。</text><clipPath id="c3"><rect x="186" y="160" width="586" height="300"/></clipPath><g clip-path="url(#c3)"><text x="188" y="186.0" font-size="22.4" font-weight="700" fill="#2a2a2a" font-family="'Liberation Serif','Noto Serif CJK SC',serif">宪法是国家的根本大法是治国安邦的总章程适用于国家全体公民是特定社会政治经济和思想文化条件综合作用的产物</text><text x="188" y="213.6" font-size="22.4" font-weight="700" fill="#2a2a2a" font-family="'Liberation Serif','Noto Serif CJK SC',serif">法是国家的根本大法是治国安邦的总章程适用于国家全体公民是特定社会政治经济和思想文化条件综合作用的产物宪</text><text x="188" y="241.2" font-size="22.4" font-weight="700" fill="#2a2a2a" font-family="'Liberation Serif','Noto Serif CJK SC',serif">是国家的根本大法是治国安邦的总章程适用于国家全体公民是特定社会政治经济和思想文化条件综合作用的产物宪法</text><text x="188" y="268.8" font-size="22.4" font-weight="700" fill="#2a2a2a" font-family="'Liberation Serif','Noto Serif CJK SC',serif">国家的根本大法是治国安邦的总章程适用于国家全体公民是特定社会政治经济和思想文化条件综合作用的产物宪法是</text><text x="188" y="296.4" font-size="22.4" font-weight="700" fill="#2a2a2a" font-family="'Liberation Serif','Noto Serif CJK SC',serif">家的根本大法是治国安邦的总章程适用于国家全体公民是特定社会政治经济和思想文化条件综合作用的产物宪法是国</text><text x="188" y="324.0" font-size="22.4" font-weight="700" fill="#2a2a2a" font-family="'Liberation Serif','Noto Serif CJK SC',serif">的根本大法是治国安邦的总章程适用于国家全体公民是特定社会政治经济和思想文化条件综合作用的产物宪法是国家</text><text x="188" y="351.6" font-size="22.4" font-weight="700" fill="#2a2a2a" font-family="'Liberation Serif','Noto Serif CJK SC',serif">根本大法是治国安邦的总章程适用于国家全体公民是特定社会政治经济和思想文化条件综合作用的产物宪法是国家的</text><text x="188" y="379.2" font-size="22.4" font-weight="700" fill="#2a2a2a" font-family="'Liberation Serif','Noto Serif CJK SC',serif">本大法是治国安邦的总章程适用于国家全体公民是特定社会政治经济和思想文化条件综合作用的产物宪法是国家的根</text><text x="188" y="406.8" font-size="22.4" font-weight="700" fill="#2a2a2a" font-family="'Liberation Serif','Noto Serif CJK SC',serif">大法是治国安邦的总章程适用于国家全体公民是特定社会政治经济和思想文化条件综合作用的产物宪法是国家的根本</text><text x="188" y="434.4" font-size="22.4" font-weight="700" fill="#2a2a2a" font-family="'Liberation Serif','Noto Serif CJK SC',serif">法是治国安邦的总章程适用于国家全体公民是特定社会政治经济和思想文化条件综合作用的产物宪法是国家的根本大</text></g></svg>
<div class="t" style="top:424.43px;line-height:16.5px;font-size:11px;color:#444;font-weight:700;left:21.6px;transform:translateX(-50%);">3</div>
<div style="left:32.16px;top:531.28px;width:169.44px;height:96.39px;border:1px solid #d2d2d2;background:#f2f2f2;"></div>
<svg style="left:35.28px;top:534.16px;overflow:hidden;" width="164.4" height="90.97" viewBox="0 0 960 540" preserveAspectRatio="none"><use href="#phB"/><rect x="168" y="0" width="624" height="40" fill="url(#tb)"/><rect x="168" y="490" width="624" height="50" fill="#0e3b5e"/><rect x="153.5" y="17" width="644.5" height="489" fill="#fff"/><text x="464" y="90" font-size="37.5" text-anchor="middle" fill="#222" font-family="'Liberation Serif','Noto Serif CJK SC',serif">节日意义</text><text x="200" y="160" font-size="30" fill="#e02020" font-family="'Liberation Serif','Noto Serif CJK SC',serif">•</text><text x="221" y="160" font-size="30" font-weight="700" fill="#e02020" font-family="'Liberation Serif','Noto Serif CJK SC',serif">首先，设立国家宪法日有助于强化依宪治</text><text x="221" y="190" font-size="30" font-weight="700" fill="#e02020" font-family="'Liberation Serif','Noto Serif CJK SC',serif">国、发挥宪法作用、维护宪法权威。</text><text x="200" y="276" font-size="30" fill="#222" font-family="'Liberation Serif','Noto Serif CJK SC',serif">•</text><text x="221" y="276.0" font-size="28.6" fill="#333" font-family="'Liberation Serif','Noto Serif CJK SC',serif">2012年12月4日，习近平总书记在首都各界</text><text x="221" y="307.3" font-size="28.6" fill="#333" font-family="'Liberation Serif','Noto Serif CJK SC',serif">纪念现行宪法公布施行30周年大会上指出：</text><text x="221" y="338.6" font-size="28.6" fill="#333" font-family="'Liberation Serif','Noto Serif CJK SC',serif">"全面贯彻实施宪法，是建设社会主义法</text><text x="221" y="369.9" font-size="28.6" fill="#333" font-family="'Liberation Serif','Noto Serif CJK SC',serif">治国家的首要任务和基础性工作。"</text></svg>
<div class="t" style="top:538.61px;line-height:16.5px;font-size:11px;color:#444;font-weight:700;left:21.6px;transform:translateX(-50%);">4</div>
<div style="left:31.32px;top:643.09px;width:171.96px;height:99.95px;border:2px solid #e0703a;border-radius:4px;background:#fff;"></div>
<svg style="left:35.28px;top:648.34px;overflow:hidden;" width="164.4" height="91.82" viewBox="0 0 960 545" preserveAspectRatio="none"><use href="#phB"/><rect x="139.4" y="0" width="698.9" height="546" fill="#fff"/><g fill="#111" font-weight="600"><text x="473" y="39" font-size="38.6" text-anchor="middle" fill="#111" font-family="'Liberation Serif','Noto Serif CJK SC',serif">宣传标语</text><text x="151.1" y="73.1" font-size="17" font-family="'Liberation Serif','Noto Serif CJK SC',serif">•</text><text x="174.1" y="73.1" font-size="16.3" letter-spacing="1.2" font-family="'Liberation Serif','Noto Serif CJK SC',serif">1、增强宪法意识，推动科学发展，促进社会和谐。</text><text x="151.1" y="95.0" font-size="17" font-family="'Liberation Serif','Noto Serif CJK SC',serif">•</text><text x="174.1" y="95.0" font-size="16.3" letter-spacing="1.2" font-family="'Liberation Serif','Noto Serif CJK SC',serif">2、全面贯彻落实科学发展观，建设社会主义和谐社会。</text><text x="151.1" y="116.9" font-size="17" font-family="'Liberation Serif','Noto Serif CJK SC',serif">•</text><text x="174.1" y="116.9" font-size="16.3" letter-spacing="1.2" font-family="'Liberation Serif','Noto Serif CJK SC',serif">3、弘扬宪法精神，树立宪法权威。</text><text x="151.1" y="138.8" font-size="17" font-family="'Liberation Serif','Noto Serif CJK SC',serif">•</text><text x="174.1" y="138.8" font-size="16.3" letter-spacing="1.2" font-family="'Liberation Serif','Noto Serif CJK SC',serif">4、加强公民意识教育，树立社会主义民主法治、自由平等、公平正义理念。</text><text x="151.1" y="160.6" font-size="17" font-family="'Liberation Serif','Noto Serif CJK SC',serif">•</text><text x="174.1" y="160.6" font-size="16.3" letter-spacing="1.2" font-family="'Liberation Serif','Noto Serif CJK SC',serif">5、加强法制宣传教育，提高公民法律素质。</text><text x="151.1" y="182.5" font-size="17" font-family="'Liberation Serif','Noto Serif CJK SC',serif">•</text><text x="174.1" y="182.5" font-size="16.3" letter-spacing="1.2" font-family="'Liberation Serif','Noto Serif CJK SC',serif">6、坚持党的领导、人民当家作主和依法治国的有机统一。</text><text x="151.1" y="204.4" font-size="17" font-family="'Liberation Serif','Noto Serif CJK SC',serif">•</text><text x="174.1" y="204.4" font-size="16.3" letter-spacing="1.2" font-family="'Liberation Serif','Noto Serif CJK SC',serif">7、实施依法治国基本方略，建设社会主义法治国家。</text><text x="151.1" y="226.3" font-size="17" font-family="'Liberation Serif','Noto Serif CJK SC',serif">•</text><text x="174.1" y="226.3" font-size="16.3" letter-spacing="1.2" font-family="'Liberation Serif','Noto Serif CJK SC',serif">8、依法治国是社会主义民主政治的基本要求。</text><text x="151.1" y="248.2" font-size="17" font-family="'Liberation Serif','Noto Serif CJK SC',serif">•</text><text x="174.1" y="248.2" font-size="16.3" letter-spacing="1.2" font-family="'Liberation Serif','Noto Serif CJK SC',serif">9、加强社会主义法治，扩大社会主义民主。</text><text x="151.1" y="270.1" font-size="17" font-family="'Liberation Serif','Noto Serif CJK SC',serif">•</text><text x="174.1" y="270.1" font-size="16.3" letter-spacing="1.2" font-family="'Liberation Serif','Noto Serif CJK SC',serif">10、社会公平正义是社会和谐的基本条件，制度是社会公平正义的根本保证。</text><text x="151.1" y="292.0" font-size="17" font-family="'Liberation Serif','Noto Serif CJK SC',serif">•</text><text x="174.1" y="292.0" font-size="16.3" letter-spacing="1.2" font-family="'Liberation Serif','Noto Serif CJK SC',serif">11、发展基层民主，保障人们享有更多更切实的民主权利。</text><text x="151.1" y="313.9" font-size="17" font-family="'Liberation Serif','Noto Serif CJK SC',serif">•</text><text x="174.1" y="313.9" font-size="16.3" letter-spacing="1.2" font-family="'Liberation Serif','Noto Serif CJK SC',serif">12、维护社会公平正义，维护社会主义法制的统一、尊严、权威。</text><text x="151.1" y="335.7" font-size="17" font-family="'Liberation Serif','Noto Serif CJK SC',serif">•</text><text x="174.1" y="335.7" font-size="16.3" letter-spacing="1.2" font-family="'Liberation Serif','Noto Serif CJK SC',serif">13、学习宣传宪法，推进民主法制建设；</text><text x="151.1" y="357.6" font-size="17" font-family="'Liberation Serif','Noto Serif CJK SC',serif">•</text><text x="174.1" y="357.6" font-size="16.3" letter-spacing="1.2" font-family="'Liberation Serif','Noto Serif CJK SC',serif">14、宪法是国家的根本大法；</text><text x="151.1" y="379.5" font-size="17" font-family="'Liberation Serif','Noto Serif CJK SC',serif">•</text><text x="174.1" y="379.5" font-size="16.3" letter-spacing="1.2" font-family="'Liberation Serif','Noto Serif CJK SC',serif">15、宪法是人民意志的体现；</text><text x="151.1" y="401.4" font-size="17" font-family="'Liberation Serif','Noto Serif CJK SC',serif">•</text><text x="174.1" y="401.4" font-size="16.3" letter-spacing="1.2" font-family="'Liberation Serif','Noto Serif CJK SC',serif">16、一切权利属于人民；</text><text x="151.1" y="423.3" font-size="17" font-family="'Liberation Serif','Noto Serif CJK SC',serif">•</text><text x="174.1" y="423.3" font-size="16.3" letter-spacing="1.2" font-family="'Liberation Serif','Noto Serif CJK SC',serif">17、遵守宪法和法律，是公民的一项基本义务；</text><text x="151.1" y="445.2" font-size="17" font-family="'Liberation Serif','Noto Serif CJK SC',serif">•</text><text x="174.1" y="445.2" font-size="16.3" letter-spacing="1.2" font-family="'Liberation Serif','Noto Serif CJK SC',serif">18、树立宪法意识，维护宪法权威；</text><text x="151.1" y="467.1" font-size="17" font-family="'Liberation Serif','Noto Serif CJK SC',serif">•</text><text x="174.1" y="467.1" font-size="16.3" letter-spacing="1.2" font-family="'Liberation Serif','Noto Serif CJK SC',serif">19、依法治国，建设社会主义法治国家；</text><text x="151.1" y="489.0" font-size="17" font-family="'Liberation Serif','Noto Serif CJK SC',serif">•</text><text x="174.1" y="489.0" font-size="16.3" letter-spacing="1.2" font-family="'Liberation Serif','Noto Serif CJK SC',serif">20、公正司法和严格执法，是建设社会主义法治国家的重要内容；</text><text x="151.1" y="510.8" font-size="17" font-family="'Liberation Serif','Noto Serif CJK SC',serif">•</text><text x="174.1" y="510.8" font-size="16.3" letter-spacing="1.2" font-family="'Liberation Serif','Noto Serif CJK SC',serif">21、深入开展法制宣传教育，提高全民法律素质；</text></g></svg>
<div class="t" style="top:652.79px;line-height:16.5px;font-size:11px;color:#e0703a;font-weight:700;left:21.6px;transform:translateX(-50%);">5</div>
<div style="left:32.16px;top:758.63px;width:169.44px;height:96.39px;border:1px solid #d2d2d2;background:#f2f2f2;"></div>
<svg style="left:35.28px;top:761.51px;overflow:hidden;filter:brightness(1.12) saturate(1.35);" width="164.4" height="90.97" viewBox="0 0 960 540" preserveAspectRatio="none"><use href="#phA"/></svg>
<div class="s" style="top:797.38px;line-height:15.0px;font-size:10px;color:#fff;font-weight:900;left:111.6px;transform:translateX(-50%);">谢谢观看</div>
<div class="t" style="top:765.96px;line-height:16.5px;font-size:11px;color:#444;font-weight:700;left:21.6px;transform:translateX(-50%);">6</div>
</div>
<svg style="left:86.03px;top:26.13px;" width="12.5" height="15.5" viewBox="0 0 12.5 15.5"><rect x="0" y="0" width="12.5" height="15.5" rx="3.5" fill="#f0522c"/><path d="M3.2 9.5 C4.5 12.5 8 12.3 9.5 9.2 M6.3 11.5 C6 8 6.5 5.5 8.6 3.6" fill="none" stroke="#fff" stroke-width="1.5" stroke-linecap="round"/></svg>
<svg style="left:199.12px;top:25.88px;" width="16" height="16" viewBox="0 0 16 16"><rect x="0" y="0" width="16" height="16" rx="2" fill="#ee6a3a"/><path d="M4 4.6 H10.6 Q12.6 4.6 12.6 6.8 Q12.6 9 10.6 9 H4 M4 4.6 V12" fill="none" stroke="#fff" stroke-width="1.7" stroke-linejoin="round"/></svg>
<svg style="left:395.64px;top:27.2px;" width="12" height="12" viewBox="0 0 12 12"><rect x="0.8" y="1.5" width="10.4" height="6.5" rx="1" fill="none" stroke="#9a9a9a" stroke-width="1.1" stroke-linecap="round" stroke-linejoin="round"/><path d="M6 8 V10.5 M3.5 10.7 H8.5" fill="none" stroke="#9a9a9a" stroke-width="1.1" stroke-linecap="round" stroke-linejoin="round"/></svg>
<svg style="left:417.5px;top:27.2px;" width="11" height="12" viewBox="0 0 11 12"><path d="M0.8 1 L10.2 11 M10.2 1 L0.8 11" fill="none" stroke="#777" stroke-width="1.2" stroke-linecap="round" stroke-linejoin="round"/></svg>
<svg style="left:454.92px;top:24.87px;" width="12" height="16" viewBox="0 0 12 16"><path d="M6 1.5 V14.5 M0.5 8 H11.5" stroke="#3a3a3a" stroke-width="1.9" fill="none"/></svg>
<svg style="left:1456.12px;top:9.34px;" width="10" height="3" viewBox="0 0 10 3"><path d="M0 1.5 H10" stroke="#8a8a8a" stroke-width="1.2"/></svg>
<svg style="left:1485.4px;top:3.97px;" width="10" height="9" viewBox="0 0 10 9"><rect x="0.6" y="0.6" width="8.8" height="7.8" fill="none" stroke="#7a7a7a" stroke-width="1.2" stroke-linecap="round" stroke-linejoin="round"/></svg>
<svg style="left:1516.12px;top:3.81px;" width="10" height="10" viewBox="0 0 10 10"><path d="M0.6 0.6 L9.4 9.4 M9.4 0.6 L0.6 9.4" fill="none" stroke="#7a7a7a" stroke-width="1.2" stroke-linecap="round" stroke-linejoin="round"/></svg>
<svg style="left:15.2px;top:60.55px;" width="14" height="9" viewBox="0 0 14 9"><path d="M0 0.8 H14 M0 4.5 H14 M0 8.2 H14" fill="none" stroke="#555" stroke-width="1.1" stroke-linecap="round" stroke-linejoin="round"/></svg>
<svg style="left:67.26px;top:62.73px;" width="9" height="6" viewBox="0 0 9 6"><path d="M0.6 0.8 L4.5 5 L8.4 0.8" fill="none" stroke="#777" stroke-width="1.1" stroke-linecap="round" stroke-linejoin="round"/></svg>
<svg style="left:94.52px;top:58.55px;" width="14" height="13" viewBox="0 0 14 13"><path d="M1 0.8 H10.8 L13 3 V12.2 H1Z" fill="none" stroke="#5a5a5a" stroke-width="1.2" stroke-linecap="round" stroke-linejoin="round"/><path d="M3.6 0.8 V4.6 H9.8 V0.8 M3 12 V8 H11 V12" fill="none" stroke="#5a5a5a" stroke-width="1.1" stroke-linecap="round" stroke-linejoin="round"/></svg>
<svg style="left:117.44px;top:58.55px;" width="14" height="13" viewBox="0 0 14 13"><path d="M4 12.2 V3.5 M4 3.5 C4 1.5 6 1 8 1 C11.5 1 13 2.4 13 4.3 C13 6.4 11.5 7.6 8 7.6 H6.4 M4 12.2 H6.6 M0.8 4.6 H6.8 M4.6 2.6 L6.8 4.6 L4.6 6.6" fill="none" stroke="#5a5a5a" stroke-width="1.2" stroke-linecap="round" stroke-linejoin="round"/></svg>
<svg style="left:140.72px;top:58.55px;" width="14" height="13" viewBox="0 0 14 13"><path d="M3.2 4 V1 H10.8 V4 M3.2 9.4 H1.6 Q0.8 9.4 0.8 8.4 V5 Q0.8 4 1.8 4 H12.2 Q13.2 4 13.2 5 V8.4 Q13.2 9.4 12.4 9.4 H10.8 M3.2 7.4 H10.8 V12.2 H3.2Z" fill="none" stroke="#5a5a5a" stroke-width="1.2" stroke-linecap="round" stroke-linejoin="round"/></svg>
<svg style="left:163.74px;top:58.55px;" width="15" height="13" viewBox="0 0 15 13"><path d="M7 12 H1 V1 H11.6 V4.4" fill="none" stroke="#5a5a5a" stroke-width="1.2" stroke-linecap="round" stroke-linejoin="round"/><circle cx="9" cy="7.4" r="3.1" fill="none" stroke="#5a5a5a" stroke-width="1.2" stroke-linecap="round" stroke-linejoin="round"/><path d="M11.3 9.8 L14 12.4" fill="none" stroke="#5a5a5a" stroke-width="1.4" stroke-linecap="round" stroke-linejoin="round"/></svg>
<svg style="left:188.88px;top:59.05px;" width="12" height="12" viewBox="0 0 12 12"><path d="M1 2 V6 H5 M1.2 6 C3 2.4 7.4 1.6 9.6 4 C12 6.8 10 10.6 6 11" fill="none" stroke="#bdbdbd" stroke-width="1.2" stroke-linecap="round" stroke-linejoin="round"/></svg>
<svg style="left:204.96px;top:63.39px;" width="6" height="4" viewBox="0 0 6 4"><path d="M0.3 0.5 L5.7 0.5 L3 3.6Z" fill="#c6c6c6"/></svg>
<svg style="left:219.0px;top:59.05px;" width="12" height="12" viewBox="0 0 12 12"><path d="M11 2 V6 H7 M10.8 6 C9 2.4 4.6 1.6 2.4 4 C0 6.8 2 10.6 6 11" fill="none" stroke="#bdbdbd" stroke-width="1.2" stroke-linecap="round" stroke-linejoin="round"/></svg>
<svg style="left:245.84px;top:60.89px;" width="8" height="9" viewBox="0 0 8 9"><path d="M0.6 1 H7.4" fill="none" stroke="#666" stroke-width="1.2" stroke-linecap="round" stroke-linejoin="round"/><path d="M0.6 3.6 H7.4 L4 8Z" fill="#666"/></svg>
<svg style="left:908.6px;top:58.55px;" width="14" height="13" viewBox="0 0 14 13"><circle cx="5.6" cy="5.4" r="4.6" fill="none" stroke="#5a5a5a" stroke-width="1.3" stroke-linecap="round" stroke-linejoin="round"/><path d="M9 8.8 L13 12.2" fill="none" stroke="#5a5a5a" stroke-width="1.5" stroke-linecap="round" stroke-linejoin="round"/></svg>
<svg style="left:1297.1px;top:59.39px;" width="17" height="12" viewBox="0 0 17 12"><path d="M10 11 H4.2 C1.8 11 0.7 9.4 0.7 7.8 C0.7 6 2 4.8 3.7 4.8 C4.2 2.4 6 0.8 8.4 0.8 C11 0.8 12.6 2.6 12.9 4.6 C14.8 4.7 16.2 6 16.2 7.6" fill="none" stroke="#6a6a6a" stroke-width="1.2" stroke-linecap="round" stroke-linejoin="round"/><ellipse cx="12.6" cy="9.2" rx="3.3" ry="2.6" fill="#a9b3c8"/></svg>
<svg style="left:1355.4px;top:63.39px;" width="6" height="4" viewBox="0 0 6 4"><path d="M0.3 0.5 L5.7 0.5 L3 3.6Z" fill="#777"/></svg>
<svg style="left:1370.0px;top:58.89px;" width="14" height="13" viewBox="0 0 14 13"><circle cx="5.6" cy="3.6" r="2.9" fill="none" stroke="#666" stroke-width="1.2" stroke-linecap="round" stroke-linejoin="round"/><path d="M0.8 12.2 C0.8 8.6 3 7.4 5.6 7.4 C7.2 7.4 8.2 7.8 9 8.6 M0.8 12.2 H8.6 M11.2 7 V12 M8.7 9.5 H13.7" fill="none" stroke="#666" stroke-width="1.2" stroke-linecap="round" stroke-linejoin="round"/></svg>
<svg style="left:1423.84px;top:58.89px;" width="16" height="13" viewBox="0 0 16 13"><path d="M0.8 6.5 V12.2 H14 V8.5 M4.2 9 C4.4 5.4 7 3.4 11 3.4 M8.6 0.8 L11.6 3.4 L8.6 6" fill="none" stroke="#555" stroke-width="1.3" stroke-linecap="round" stroke-linejoin="round"/></svg>
<svg style="left:1488.78px;top:58.89px;" width="3" height="13" viewBox="0 0 3 13"><circle cx="1.5" cy="1.5" r="1.1" fill="#555"/><circle cx="1.5" cy="6.5" r="1.1" fill="#555"/><circle cx="1.5" cy="11.5" r="1.1" fill="#555"/></svg>
<svg style="left:1506.9px;top:61.05px;" width="15" height="8" viewBox="0 0 15 8"><path d="M0.8 7 L7.5 1 L14.2 7" fill="none" stroke="#555" stroke-width="1.3" stroke-linecap="round" stroke-linejoin="round"/></svg>
<svg style="left:15.38px;top:88.79px;" width="23" height="23" viewBox="0 0 23 23"><rect x="0.8" y="3" width="14.4" height="17" rx="2.5" fill="none" stroke="#666" stroke-width="1.3" stroke-linecap="round" stroke-linejoin="round"/><rect x="4.2" y="0.8" width="7.6" height="4" rx="1" fill="#f5f5f5" stroke="#666" stroke-width="1.2" stroke-linecap="round" stroke-linejoin="round"/><path d="M7 10.6 Q7 9.2 8.4 9.2 H20.6 Q22 9.2 22 10.6 V18.4 L18.6 22 H8.4 Q7 22 7 20.6Z" fill="#fcebe0" stroke="#e8956a" stroke-width="1.1" stroke-linecap="round" stroke-linejoin="round"/></svg>
<svg style="left:36.84px;top:122.69px;" width="6" height="4" viewBox="0 0 6 4"><path d="M0.3 0.5 L5.7 0.5 L3 3.6Z" fill="#6b6b6b"/></svg>
<svg style="left:52.3px;top:91.74px;" width="13" height="11" viewBox="0 0 13 11"><path d="M1.4 0.8 L10 8 M11.6 0.8 L3 8" fill="none" stroke="#bdbdbd" stroke-width="1.1" stroke-linecap="round" stroke-linejoin="round"/><circle cx="2.6" cy="9" r="1.7" fill="none" stroke="#bdbdbd" stroke-width="1.1" stroke-linecap="round" stroke-linejoin="round"/><circle cx="10.4" cy="9" r="1.7" fill="none" stroke="#bdbdbd" stroke-width="1.1" stroke-linecap="round" stroke-linejoin="round"/></svg>
<svg style="left:52.3px;top:116.65px;" width="13" height="12" viewBox="0 0 13 12"><rect x="3.8" y="0.8" width="8.4" height="7.4" rx="1" fill="none" stroke="#bdbdbd" stroke-width="1.1" stroke-linecap="round" stroke-linejoin="round"/><path d="M3.8 3.4 H1.8 Q0.8 3.4 0.8 4.4 V10.2 Q0.8 11.2 1.8 11.2 H8.2 Q9.2 11.2 9.2 10.2 V8.2" fill="none" stroke="#bdbdbd" stroke-width="1.1" stroke-linecap="round" stroke-linejoin="round"/></svg>
<svg style="left:108.24px;top:88.28px;" width="24" height="22" viewBox="0 0 24 22"><path d="M9 1 H15 V8 H21 Q22.6 8 22.6 9.6 V14 H1.4 V9.6 Q1.4 8 3 8 H9Z M2.6 14 V21 H21.4 V14" fill="none" stroke="#bdbdbd" stroke-width="1.2" stroke-linecap="round" stroke-linejoin="round"/></svg>
<svg style="left:137.92px;top:136.92px;" width="4" height="4" viewBox="0 0 4 4"><path d="M0.5 3.5 H3.5 V0.5" fill="none" stroke="#9a9a9a" stroke-width="0.9" stroke-linecap="round" stroke-linejoin="round"/></svg>
<svg style="left:177.72px;top:87.94px;" width="24" height="23" viewBox="0 0 24 23"><ellipse cx="12" cy="11.5" rx="11.2" ry="10.6" fill="none" stroke="#666" stroke-width="1.2" stroke-linecap="round" stroke-linejoin="round"/><path d="M8.6 5.6 V17.4 L17.6 11.5Z" fill="none" stroke="#e8956a" stroke-width="1.2" stroke-linecap="round" stroke-linejoin="round"/></svg>
<svg style="left:218.28px;top:122.69px;" width="6" height="4" viewBox="0 0 6 4"><path d="M0.3 0.5 L5.7 0.5 L3 3.6Z" fill="#6b6b6b"/></svg>
<svg style="left:265.46px;top:88.94px;" width="23" height="21" viewBox="0 0 23 21"><rect x="3" y="3.4" width="19.2" height="16.8" rx="2" fill="none" stroke="#666" stroke-width="1.3" stroke-linecap="round" stroke-linejoin="round"/><path d="M7 8.4 H18.6 V11.6 H7Z" fill="none" stroke="#9a9a9a" stroke-width="1" stroke-linecap="round" stroke-linejoin="round"/><path d="M3 0.4 V6 M0.2 3.2 H5.8 M1 1.2 L5 5.2 M5 1.2 L1 5.2" fill="none" stroke="#e8956a" stroke-width="0.9" stroke-linecap="round" stroke-linejoin="round"/></svg>
<svg style="left:304.68px;top:122.69px;" width="6" height="4" viewBox="0 0 6 4"><path d="M0.3 0.5 L5.7 0.5 L3 3.6Z" fill="#6b6b6b"/></svg>
<svg style="left:324.0px;top:88.94px;" width="24" height="21" viewBox="0 0 24 21"><rect x="0.8" y="0.8" width="22.4" height="19.4" rx="2" fill="none" stroke="#666" stroke-width="1.3" stroke-linecap="round" stroke-linejoin="round"/><path d="M4.4 4.4 H19.6 V8.6 H4.4Z M4.4 12 H9 V16 H4.4Z M12 12.4 H19.6 M12 15.6 H19.6" fill="none" stroke="#e8956a" stroke-width="1" stroke-linecap="round" stroke-linejoin="round"/></svg>
<svg style="left:346.68px;top:122.69px;" width="6" height="4" viewBox="0 0 6 4"><path d="M0.3 0.5 L5.7 0.5 L3 3.6Z" fill="#6b6b6b"/></svg>
<svg style="left:360.88px;top:90.74px;" width="16" height="13" viewBox="0 0 16 13"><rect x="2.6" y="3" width="12.6" height="9.2" rx="1.2" fill="none" stroke="#777" stroke-width="1.2" stroke-linecap="round" stroke-linejoin="round"/><path d="M5.4 6 H12.4" fill="none" stroke="#aaa" stroke-width="1" stroke-linecap="round" stroke-linejoin="round"/><path d="M1 3.6 C1 1.6 2.4 0.8 4.4 0.8 M3 0 L4.6 0.8 L3.4 2.2" fill="none" stroke="#e8956a" stroke-width="0.9" stroke-linecap="round" stroke-linejoin="round"/></svg>
<svg style="left:360.88px;top:117.67px;" width="16" height="12" viewBox="0 0 16 12"><path d="M2.6 4 H15.2 M2.6 7.4 H15.2 M2.6 4 V11.2 H15.2 V4" fill="none" stroke="#777" stroke-width="1.2" stroke-linecap="round" stroke-linejoin="round"/><path d="M1.6 0 V3 M0.2 1.5 H3 M0.6 0.4 L2.6 2.6 M2.6 0.4 L0.6 2.6" fill="none" stroke="#e8956a" stroke-width="0.7" stroke-linecap="round" stroke-linejoin="round"/></svg>
<svg style="left:394.2px;top:122.01px;" width="6" height="4" viewBox="0 0 6 4"><path d="M0.3 0.5 L5.7 0.5 L3 3.6Z" fill="#6b6b6b"/></svg>
<svg style="left:522.12px;top:95.24px;" width="6" height="4" viewBox="0 0 6 4"><path d="M0.3 0.5 L5.7 0.5 L3 3.6Z" fill="#bbb"/></svg>
<svg style="left:583.32px;top:95.24px;" width="6" height="4" viewBox="0 0 6 4"><path d="M0.3 0.5 L5.7 0.5 L3 3.6Z" fill="#bbb"/></svg>
<svg style="left:598.94px;top:88.9px;" width="17" height="16" viewBox="0 0 17 16"><path d="M1 15 L6.6 1.4 L12.2 15 M3 10.4 H10.2" fill="none" stroke="#bdbdbd" stroke-width="1.3" stroke-linecap="round" stroke-linejoin="round"/><path d="M14.4 0.6 V4.2 M12.6 2.4 H16.2" fill="none" stroke="#bdbdbd" stroke-width="0.9" stroke-linecap="round" stroke-linejoin="round"/></svg>
<svg style="left:623.94px;top:88.9px;" width="15" height="16" viewBox="0 0 15 16"><path d="M1 15 L6 2.6 L11 15 M2.8 10.8 H9.2" fill="none" stroke="#bdbdbd" stroke-width="1.3" stroke-linecap="round" stroke-linejoin="round"/><path d="M11.4 2.4 H14.6" fill="none" stroke="#bdbdbd" stroke-width="0.9" stroke-linecap="round" stroke-linejoin="round"/></svg>
<svg style="left:422.66px;top:114.8px;" width="11" height="13" viewBox="0 0 11 13"><path d="M1.2 1 V12 M1.2 1 H6.4 C9.6 1 9.6 6 6.4 6 H1.2 M1.2 6 H7 C10.6 6 10.6 12 7 12 H1.2" fill="none" stroke="#bdbdbd" stroke-width="1.5" stroke-linecap="round" stroke-linejoin="round"/></svg>
<svg style="left:446.96px;top:114.8px;" width="8" height="13" viewBox="0 0 8 13"><path d="M6.6 0.8 L1.4 12.2" fill="none" stroke="#bdbdbd" stroke-width="1.4" stroke-linecap="round" stroke-linejoin="round"/></svg>
<svg style="left:468.36px;top:114.31px;" width="12" height="15" viewBox="0 0 12 15"><path d="M1.4 0.8 V6.4 C1.4 11.4 10.6 11.4 10.6 6.4 V0.8 M0.6 14 H11.4" fill="none" stroke="#bdbdbd" stroke-width="1.3" stroke-linecap="round" stroke-linejoin="round"/></svg>
<svg style="left:491.26px;top:114.8px;" width="13" height="13" viewBox="0 0 13 13"><path d="M11 2.6 C9.6 0.2 2 0 2 3.4 C2 6.4 11.6 6 11.6 9.4 C11.6 13 3 13 1.4 10 M0.4 6.5 H12.6" fill="none" stroke="#bdbdbd" stroke-width="1.3" stroke-linecap="round" stroke-linejoin="round"/></svg>
<svg style="left:513.3px;top:114.31px;" width="15" height="15" viewBox="0 0 15 15"><path d="M2.6 10.6 L7.5 0.8 L12.4 10.6 M4.4 7.2 H10.6" fill="none" stroke="#bdbdbd" stroke-width="1.3" stroke-linecap="round" stroke-linejoin="round"/><path d="M0.6 13.8 H14.4" fill="none" stroke="#bdbdbd" stroke-width="1.5" stroke-linecap="round" stroke-linejoin="round"/></svg>
<svg style="left:531.72px;top:119.3px;" width="6" height="4" viewBox="0 0 6 4"><path d="M0.3 0.5 L5.7 0.5 L3 3.6Z" fill="#bbb"/></svg>
<svg style="left:544.48px;top:114.8px;" width="16" height="13" viewBox="0 0 16 13"><path d="M1 2.4 L10.4 12.4 M10.4 2.4 L1 12.4" fill="none" stroke="#bdbdbd" stroke-width="1.3" stroke-linecap="round" stroke-linejoin="round"/><path d="M12.4 1.2 C12.8 0.2 15 0.2 15 1.4 C15 2.6 12.6 3.4 12.4 4.6 H15.2" fill="none" stroke="#bdbdbd" stroke-width="0.8" stroke-linecap="round" stroke-linejoin="round"/></svg>
<svg style="left:567.52px;top:114.8px;" width="16" height="13" viewBox="0 0 16 13"><path d="M1 0.8 L10.4 10.8 M10.4 0.8 L1 10.8" fill="none" stroke="#bdbdbd" stroke-width="1.3" stroke-linecap="round" stroke-linejoin="round"/><path d="M12.4 8.8 C12.8 7.8 15 7.8 15 9 C15 10.2 12.6 11 12.4 12.2 H15.2" fill="none" stroke="#bdbdbd" stroke-width="0.8" stroke-linecap="round" stroke-linejoin="round"/></svg>
<svg style="left:592.48px;top:114.8px;" width="16" height="13" viewBox="0 0 16 13"><path d="M6.4 0.8 L15 5.4 L8.6 11.4 L0.8 6.4Z M4.4 11.6 H13" fill="none" stroke="#a8a8a8" stroke-width="1.2" stroke-linecap="round" stroke-linejoin="round"/></svg>
<svg style="left:617.74px;top:112.28px;" width="13" height="16" viewBox="0 0 13 16"><path d="M0.8 6.4 H12.2 M6.5 4.4 V6.4 M2.6 8.4 C4 12 8 14.4 12 15.2 M10.4 8.4 C9 12 5 14.4 1 15.2" fill="none" stroke="#666" stroke-width="1.2" stroke-linecap="round" stroke-linejoin="round"/><path d="M1.6 1.6 L2.6 3 L3.6 1.6 L4.6 3 M6 1.6 V3 M7.6 3 V1.8 Q8.6 1 9.6 2 V3 M11 2.2 H12.4" fill="none" stroke="#e8956a" stroke-width="0.7" stroke-linecap="round" stroke-linejoin="round"/></svg>
<svg style="left:634.44px;top:119.64px;" width="6" height="4" viewBox="0 0 6 4"><path d="M0.3 0.5 L5.7 0.5 L3 3.6Z" fill="#6b6b6b"/></svg>
<svg style="left:639.28px;top:136.92px;" width="4" height="4" viewBox="0 0 4 4"><path d="M0.5 3.5 H3.5 V0.5" fill="none" stroke="#9a9a9a" stroke-width="0.9" stroke-linecap="round" stroke-linejoin="round"/></svg>
<svg style="left:656.84px;top:91.4px;" width="14" height="11" viewBox="0 0 14 11"><path d="M4 1 H13.6 M4 5.5 H13.6 M4 10 H13.6 M0.6 1 H1.8 M0.6 5.5 H1.8 M0.6 10 H1.8" fill="none" stroke="#bdbdbd" stroke-width="1.1" stroke-linecap="round" stroke-linejoin="round"/></svg>
<svg style="left:674.76px;top:95.24px;" width="6" height="4" viewBox="0 0 6 4"><path d="M0.3 0.5 L5.7 0.5 L3 3.6Z" fill="#bbb"/></svg>
<svg style="left:687.8px;top:91.4px;" width="14" height="11" viewBox="0 0 14 11"><path d="M4 1 H13.6 M4 5.5 H13.6 M4 10 H13.6 M0.8 0.4 V1.8 M0.4 5 H1.6 V6 M0.4 9.4 H1.6 V10.6 H0.4" fill="none" stroke="#bdbdbd" stroke-width="1.1" stroke-linecap="round" stroke-linejoin="round"/></svg>
<svg style="left:705.72px;top:95.24px;" width="6" height="4" viewBox="0 0 6 4"><path d="M0.3 0.5 L5.7 0.5 L3 3.6Z" fill="#bbb"/></svg>
<svg style="left:721.64px;top:91.4px;" width="14" height="11" viewBox="0 0 14 11"><path d="M0.6 0.8 H13.4 M6.4 4 H13.4 M6.4 7 H13.4 M0.6 10.2 H13.4 M3.6 5.5 H0.6 M1.8 4.2 L0.6 5.5 L1.8 6.8" fill="none" stroke="#bdbdbd" stroke-width="1.1" stroke-linecap="round" stroke-linejoin="round"/></svg>
<svg style="left:744.92px;top:91.4px;" width="14" height="11" viewBox="0 0 14 11"><path d="M0.6 0.8 H13.4 M6.4 4 H13.4 M6.4 7 H13.4 M0.6 10.2 H13.4 M0.6 5.5 H3.6 M2.4 4.2 L3.6 5.5 L2.4 6.8" fill="none" stroke="#bdbdbd" stroke-width="1.1" stroke-linecap="round" stroke-linejoin="round"/></svg>
<svg style="left:770.6px;top:89.74px;" width="14" height="15" viewBox="0 0 14 15"><path d="M1 0.8 V13 M4.4 0.8 V13" fill="none" stroke="#888" stroke-width="1.5" stroke-linecap="round" stroke-linejoin="round"/><path d="M7 8.4 L10 1 L13 8.4 M8 6 H12" fill="none" stroke="#e8956a" stroke-width="1.1" stroke-linecap="round" stroke-linejoin="round"/><path d="M8 10.4 V14 M12 10.4 V14" fill="none" stroke="#666" stroke-width="1.4" stroke-linecap="round" stroke-linejoin="round"/></svg>
<svg style="left:788.04px;top:95.24px;" width="6" height="4" viewBox="0 0 6 4"><path d="M0.3 0.5 L5.7 0.5 L3 3.6Z" fill="#6b6b6b"/></svg>
<svg style="left:800.3px;top:90.74px;" width="17" height="13" viewBox="0 0 17 13"><rect x="0.8" y="0.8" width="15.4" height="11.4" rx="2" fill="none" stroke="#bdbdbd" stroke-width="1.1" stroke-dasharray="2.2 1.4"/><path d="M4.4 4.6 H12.6 M4.4 6.8 H12.6 M4.4 9 H12.6" fill="none" stroke="#bdbdbd" stroke-width="0.9" stroke-linecap="round" stroke-linejoin="round"/></svg>
<svg style="left:819.48px;top:95.24px;" width="6" height="4" viewBox="0 0 6 4"><path d="M0.3 0.5 L5.7 0.5 L3 3.6Z" fill="#bbb"/></svg>
<svg style="left:833.74px;top:88.9px;" width="13" height="16" viewBox="0 0 13 16"><path d="M0.8 1 V15" fill="none" stroke="#bdbdbd" stroke-width="1.3" stroke-linecap="round" stroke-linejoin="round"/><path d="M4 8.4 L8 1 L12 8.4 M4.4 8.4 H11.6 V14.6 H4.4Z M4.4 11.6 H11.6" fill="none" stroke="#bdbdbd" stroke-width="1" stroke-linecap="round" stroke-linejoin="round"/></svg>
<svg style="left:850.44px;top:95.24px;" width="6" height="4" viewBox="0 0 6 4"><path d="M0.3 0.5 L5.7 0.5 L3 3.6Z" fill="#bbb"/></svg>
<svg style="left:656.84px;top:115.8px;" width="14" height="11" viewBox="0 0 14 11"><path d="M0.6 0.8 H10 M0.6 4 H13.4 M0.6 7.2 H10 M0.6 10.4 H13.4" fill="none" stroke="#bdbdbd" stroke-width="1.1" stroke-linecap="round" stroke-linejoin="round"/></svg>
<svg style="left:680.12px;top:115.8px;" width="14" height="11" viewBox="0 0 14 11"><path d="M2.4 0.8 H11.6 M0.6 4 H13.4 M2.4 7.2 H11.6 M0.6 10.4 H13.4" fill="none" stroke="#bdbdbd" stroke-width="1.1" stroke-linecap="round" stroke-linejoin="round"/></svg>
<svg style="left:703.4px;top:115.8px;" width="14" height="11" viewBox="0 0 14 11"><path d="M4 0.8 H13.4 M0.6 4 H13.4 M4 7.2 H13.4 M0.6 10.4 H13.4" fill="none" stroke="#bdbdbd" stroke-width="1.1" stroke-linecap="round" stroke-linejoin="round"/></svg>
<svg style="left:726.44px;top:115.8px;" width="14" height="11" viewBox="0 0 14 11"><path d="M0.6 0.8 H13.4 M0.6 4 H13.4 M0.6 7.2 H13.4 M0.6 10.4 H13.4" fill="none" stroke="#bdbdbd" stroke-width="1.1" stroke-linecap="round" stroke-linejoin="round"/></svg>
<svg style="left:748.72px;top:115.8px;" width="16" height="11" viewBox="0 0 16 11"><path d="M0.6 0.6 V4.4 M15.4 0.6 V4.4 M2.4 2.5 H6 M10 2.5 H13.6 M3.6 1.4 L2.4 2.5 L3.6 3.6 M12.4 1.4 L13.6 2.5 L12.4 3.6 M0.6 7.2 H15.4 M0.6 10.4 H15.4" fill="none" stroke="#bdbdbd" stroke-width="1.1" stroke-linecap="round" stroke-linejoin="round"/></svg>
<svg style="left:775.4px;top:115.8px;" width="14" height="11" viewBox="0 0 14 11"><path d="M5.6 1 H13.4 M5.6 4 H13.4 M5.6 7.4 H13.4 M5.6 10.4 H13.4 M2 0.4 V4.2 M0.6 2.4 H3.4 M2 6.8 V10.6 M0.6 8.6 H3.4" fill="none" stroke="#bdbdbd" stroke-width="1.1" stroke-linecap="round" stroke-linejoin="round"/></svg>
<svg style="left:798.92px;top:115.8px;" width="14" height="11" viewBox="0 0 14 11"><path d="M5.6 1 H13.4 M5.6 4 H13.4 M5.6 7.4 H13.4 M5.6 10.4 H13.4 M2 0.4 V4.2 M0.6 1.6 L2 0.4 L3.4 1.6 M2 6.8 V10.6 M0.6 9.4 L2 10.6 L3.4 9.4" fill="none" stroke="#bdbdbd" stroke-width="1.1" stroke-linecap="round" stroke-linejoin="round"/></svg>
<svg style="left:822.2px;top:114.8px;" width="14" height="13" viewBox="0 0 14 13"><path d="M5.6 2.4 H13.4 M5.6 5.5 H13.4 M5.6 8.6 H13.4 M0.4 0.5 H4 M0.4 10.5 H4 M2.2 2 V9 M1 3.2 L2.2 2 L3.4 3.2 M1 7.8 L2.2 9 L3.4 7.8 M0.6 12 H13.4" fill="none" stroke="#bdbdbd" stroke-width="1.1" stroke-linecap="round" stroke-linejoin="round"/></svg>
<svg style="left:839.64px;top:119.64px;" width="6" height="4" viewBox="0 0 6 4"><path d="M0.3 0.5 L5.7 0.5 L3 3.6Z" fill="#bbb"/></svg>
<svg style="left:854.44px;top:136.92px;" width="4" height="4" viewBox="0 0 4 4"><path d="M0.5 3.5 H3.5 V0.5" fill="none" stroke="#9a9a9a" stroke-width="0.9" stroke-linecap="round" stroke-linejoin="round"/></svg>
<svg style="left:881.76px;top:89.11px;" width="24" height="21" viewBox="0 0 24 21"><rect x="0.8" y="0.8" width="22.4" height="19.4" rx="3" fill="none" stroke="#e8956a" stroke-width="1.2" stroke-dasharray="2.6 1.6"/><path d="M5 13 L8.6 4.6 L12.2 13 M6.4 10 H10.8 M4.6 15.8 H19.4 M14.4 7 H19.4 M14.4 10 H19.4 M14.4 13 H19.4" fill="none" stroke="#666" stroke-width="1.2" stroke-linecap="round" stroke-linejoin="round"/></svg>
<svg style="left:910.92px;top:122.35px;" width="6" height="4" viewBox="0 0 6 4"><path d="M0.3 0.5 L5.7 0.5 L3 3.6Z" fill="#6b6b6b"/></svg>
<svg style="left:929.48px;top:87.44px;" width="26" height="23" viewBox="0 0 26 23"><rect x="9" y="0.8" width="16" height="14.6" rx="2" fill="none" stroke="#555" stroke-width="1.3" stroke-linecap="round" stroke-linejoin="round"/><ellipse cx="8.6" cy="15.4" rx="7.8" ry="6.6" fill="#fcebe0" stroke="#e8956a" stroke-width="1.2" stroke-linecap="round" stroke-linejoin="round"/></svg>
<svg style="left:952.68px;top:122.35px;" width="6" height="4" viewBox="0 0 6 4"><path d="M0.3 0.5 L5.7 0.5 L3 3.6Z" fill="#6b6b6b"/></svg>
<svg style="left:966.64px;top:90.58px;" width="16" height="14" viewBox="0 0 16 14"><rect x="0.8" y="0.8" width="13.6" height="10.6" rx="1" fill="none" stroke="#666" stroke-width="1.2" stroke-linecap="round" stroke-linejoin="round"/><path d="M2.4 9.4 L6 6 L8.4 8.2 L11 5.6 L13 7.4" fill="none" stroke="#777" stroke-width="0.9" stroke-linecap="round" stroke-linejoin="round"/><circle cx="5.4" cy="3.8" r="1" fill="none" stroke="#777" stroke-width="0.8" stroke-linecap="round" stroke-linejoin="round"/><path d="M13.4 9.6 V13.4 M11.5 11.5 H15.3" fill="none" stroke="#e8956a" stroke-width="1.1" stroke-linecap="round" stroke-linejoin="round"/></svg>
<svg style="left:1012.44px;top:95.58px;" width="6" height="4" viewBox="0 0 6 4"><path d="M0.3 0.5 L5.7 0.5 L3 3.6Z" fill="#6b6b6b"/></svg>
<svg style="left:966.64px;top:115.65px;" width="16" height="14" viewBox="0 0 16 14"><path d="M8 0.8 L15 3.8 L8 6.8 L1 3.8Z" fill="none" stroke="#e8956a" stroke-width="1" stroke-linecap="round" stroke-linejoin="round"/><path d="M1 7.2 L8 10.2 L15 7.2 M1 10.2 L8 13.2 L15 10.2" fill="none" stroke="#666" stroke-width="1.2" stroke-linecap="round" stroke-linejoin="round"/></svg>
<svg style="left:1012.44px;top:120.99px;" width="6" height="4" viewBox="0 0 6 4"><path d="M0.3 0.5 L5.7 0.5 L3 3.6Z" fill="#6b6b6b"/></svg>
<svg style="left:1025.22px;top:90.24px;" width="15" height="14" viewBox="0 0 15 14"><path d="M7.4 0.8 L14 5.6 L12 11.6 H3 L1 5.6Z M1 5.6 L7.4 8.6 L14 5.6" fill="none" stroke="#bdbdbd" stroke-width="1.1" stroke-linecap="round" stroke-linejoin="round"/><path d="M1.4 13.2 H13.6" fill="none" stroke="#bdbdbd" stroke-width="1.4" stroke-linecap="round" stroke-linejoin="round"/></svg>
<svg style="left:1071.24px;top:95.58px;" width="6" height="4" viewBox="0 0 6 4"><path d="M0.3 0.5 L5.7 0.5 L3 3.6Z" fill="#c4c4c4"/></svg>
<svg style="left:1025.72px;top:116.65px;" width="14" height="12" viewBox="0 0 14 12"><rect x="0.8" y="0.8" width="12.4" height="10.4" fill="none" stroke="#bdbdbd" stroke-width="1.1" stroke-linecap="round" stroke-linejoin="round"/><path d="M3.4 0.8 V11.2" fill="none" stroke="#bdbdbd" stroke-width="0.9" stroke-linecap="round" stroke-linejoin="round"/></svg>
<svg style="left:1071.24px;top:120.99px;" width="6" height="4" viewBox="0 0 6 4"><path d="M0.3 0.5 L5.7 0.5 L3 3.6Z" fill="#c4c4c4"/></svg>
<svg style="left:1074.4px;top:136.92px;" width="4" height="4" viewBox="0 0 4 4"><path d="M0.5 3.5 H3.5 V0.5" fill="none" stroke="#9a9a9a" stroke-width="0.9" stroke-linecap="round" stroke-linejoin="round"/></svg>
<svg style="left:1107.06px;top:88.11px;" width="21" height="23" viewBox="0 0 21 23"><path d="M12 22 H3.4 Q0.8 22 0.8 19.4 V3.4 Q0.8 0.8 3.4 0.8 H12.4 L16.4 4.8 V8.6" fill="none" stroke="#555" stroke-width="1.3" stroke-linecap="round" stroke-linejoin="round"/><path d="M13 11.4 C11.4 12 11.2 15 13.6 15.8 V21.6 H17.4 V15.8 C19.8 15 19.6 12 18 11.4 V13.6 H13Z" fill="#fcebe0" stroke="#e8956a" stroke-width="1.1" stroke-linecap="round" stroke-linejoin="round"/></svg>
<svg style="left:1166.3px;top:88.95px;" width="23" height="22" viewBox="0 0 23 22"><path d="M0.8 1.4 H22.2 M2.4 1.4 V13.6 H20.6 V1.4 M11.5 13.6 V18.6 M6.6 19 H16.4" fill="none" stroke="#555" stroke-width="1.3" stroke-linecap="round" stroke-linejoin="round"/><path d="M16 6.4 H21.4 V15.2 Q21.4 16 20.6 16 H16.8 Q16 16 16 15.2Z M17.4 6.4 V4 H20 V6.4" fill="#fcebe0" stroke="#e8956a" stroke-width="1.1" stroke-linecap="round" stroke-linejoin="round"/></svg>
<svg style="left:1199.88px;top:122.01px;" width="6" height="4" viewBox="0 0 6 4"><path d="M0.3 0.5 L5.7 0.5 L3 3.6Z" fill="#6b6b6b"/></svg>
<svg style="left:1213.84px;top:89.9px;" width="16" height="14" viewBox="0 0 16 14"><ellipse cx="6" cy="5" rx="5.2" ry="4.2" fill="none" stroke="#e8956a" stroke-width="1.2" stroke-linecap="round" stroke-linejoin="round"/><path d="M10 8.2 L12.4 10" fill="none" stroke="#e8956a" stroke-width="1.2" stroke-linecap="round" stroke-linejoin="round"/><path d="M12.4 10 L15 12.6" fill="none" stroke="#777" stroke-width="1.8" stroke-linecap="round" stroke-linejoin="round"/></svg>
<svg style="left:1213.34px;top:115.65px;" width="17" height="14" viewBox="0 0 17 14"><path d="M1 0.8 H6 V5 H1Z M8.4 0.8 H11.6 V5 H8.4Z" fill="none" stroke="#666" stroke-width="1" stroke-linecap="round" stroke-linejoin="round"/><path d="M1 12.6 L3.2 7.4 L5.4 12.6 M1.8 10.8 H4.6 M10.4 7.8 C7.8 7 6.6 12.6 10.4 12.4" fill="none" stroke="#e8956a" stroke-width="1" stroke-linecap="round" stroke-linejoin="round"/><path d="M12.6 1.4 H15 Q16.2 1.4 16.2 2.6 V9.4 H12.4 M14 7.6 L12.2 9.4 L14 11.2" fill="none" stroke="#666" stroke-width="1" stroke-linecap="round" stroke-linejoin="round"/></svg>
<svg style="left:1259.64px;top:120.99px;" width="6" height="4" viewBox="0 0 6 4"><path d="M0.3 0.5 L5.7 0.5 L3 3.6Z" fill="#6b6b6b"/></svg>
<svg style="left:1294.22px;top:89.11px;" width="23" height="21" viewBox="0 0 23 21"><rect x="0.8" y="0.8" width="21.4" height="16" rx="2" fill="none" stroke="#555" stroke-width="1.3" stroke-linecap="round" stroke-linejoin="round"/><path d="M5.6 0.8 V16.8" fill="none" stroke="#555" stroke-width="1.1" stroke-linecap="round" stroke-linejoin="round"/><path d="M11.6 8 L22.4 13.6 L11.6 19.6Z" fill="#f5f5f5" stroke="#e8956a" stroke-width="1.2" stroke-linecap="round" stroke-linejoin="round"/></svg>
<svg style="left:6.4px;top:158.81px;" width="10" height="9" viewBox="0 0 10 9"><path d="M4.2 0.8 L0.8 4.5 L4.2 8.2 M9 0.8 L5.6 4.5 L9 8.2" fill="none" stroke="#8a8a8a" stroke-width="1" stroke-linecap="round" stroke-linejoin="round"/></svg>
<svg style="left:102.06px;top:808.88px;" width="15" height="13" viewBox="0 0 15 13"><path d="M7.5 0.3 V12.7 M0.3 6.5 H14.7" stroke="#444" stroke-width="1.9" fill="none"/></svg>
<svg style="left:227.7px;top:809.56px;" width="15" height="14" viewBox="0 0 15 14"><path d="M0.8 0.8 H14.2 V10 H6 L3.6 13 V10 H0.8Z M3.6 4 H11.4 M3.6 6.8 H11.4" fill="none" stroke="#555" stroke-width="1.1" stroke-linecap="round" stroke-linejoin="round"/></svg>
<svg style="left:1219.76px;top:153.87px;" width="8" height="5" viewBox="0 0 8 5"><path d="M0.5 4.5 L4 0.8 L7.5 4.5Z" fill="#555"/></svg>
<svg style="left:1219.76px;top:739.86px;" width="8" height="5" viewBox="0 0 8 5"><path d="M0.5 0.5 L4 4.2 L7.5 0.5Z" fill="#555"/></svg>
<svg style="left:1219.76px;top:754.64px;" width="8" height="10" viewBox="0 0 8 10"><path d="M0.5 4.4 L4 0.6 L7.5 4.4Z M0.5 5.6 L4 9.4 L7.5 5.6Z" fill="#555"/><path d="M0.5 5 H7.5" stroke="#555" stroke-width="0.8"/></svg>
<svg style="left:1219.76px;top:772.6px;" width="8" height="10" viewBox="0 0 8 10"><path d="M0.5 0.6 L4 4.4 L7.5 0.6 M0.5 5 L4 8.8 L7.5 5" stroke="#555" stroke-width="1.2" fill="none"/></svg>
<svg style="left:179.72px;top:841.58px;" width="14" height="13" viewBox="0 0 14 13"><path d="M0.8 3 V1 H9.2 V3 M5 1 V11.6 M3.4 11.8 H6.6" stroke="#444" stroke-width="1.3" fill="none"/><text x="8.4" y="12.2" font-size="8" font-family="Liberation Sans, sans-serif" fill="#444">?</text></svg>
<svg style="left:678.66px;top:841.41px;" width="15" height="14" viewBox="0 0 15 14"><path d="M7.5 0.8 L14.2 3.8 V10 L7.5 13.2 L0.8 10 V3.8Z M0.8 3.8 L7.5 7 L14.2 3.8" fill="none" stroke="#555" stroke-width="1" stroke-linecap="round" stroke-linejoin="round"/></svg>
<svg style="left:751.56px;top:845.74px;" width="6" height="4" viewBox="0 0 6 4"><path d="M0.3 3.6 L5.7 3.6 L3 0.4Z" fill="#555"/></svg>
<svg style="left:1091.9px;top:842.41px;" width="17" height="12" viewBox="0 0 17 12"><path d="M0.8 1 H16.2 M0.8 4.6 H16.2 M0.8 8.2 H9.6" fill="none" stroke="#555" stroke-width="1.3" stroke-linecap="round" stroke-linejoin="round"/><path d="M11.4 8.4 H16.6 L14 11.6Z" fill="#555"/></svg>
<svg style="left:1111.32px;top:846.75px;" width="6" height="4" viewBox="0 0 6 4"><path d="M0.3 0.5 L5.7 0.5 L3 3.6Z" fill="#777"/></svg>
<svg style="left:1125.14px;top:841.58px;" width="17" height="13" viewBox="0 0 17 13"><rect x="0.8" y="0.8" width="15.4" height="11.4" fill="none" stroke="#444" stroke-width="1.3" stroke-linecap="round" stroke-linejoin="round"/><path d="M4.6 0.8 V12.2 M4.6 9.6 H16" fill="none" stroke="#444" stroke-width="1.1" stroke-linecap="round" stroke-linejoin="round"/></svg>
<svg style="left:1150.7px;top:841.58px;" width="17" height="13" viewBox="0 0 17 13"><rect x="0.8" y="0.8" width="6.2" height="4.6" rx="1.4" fill="none" stroke="#555" stroke-width="1.2" stroke-linecap="round" stroke-linejoin="round"/><rect x="10" y="0.8" width="6.2" height="4.6" rx="1.4" fill="none" stroke="#555" stroke-width="1.2" stroke-linecap="round" stroke-linejoin="round"/><rect x="0.8" y="7.6" width="6.2" height="4.6" rx="1.4" fill="none" stroke="#555" stroke-width="1.2" stroke-linecap="round" stroke-linejoin="round"/><rect x="10" y="7.6" width="6.2" height="4.6" rx="1.4" fill="none" stroke="#555" stroke-width="1.2" stroke-linecap="round" stroke-linejoin="round"/></svg>
<svg style="left:1175.9px;top:841.58px;" width="17" height="13" viewBox="0 0 17 13"><path d="M8.5 2 C6 0.4 3 0.4 0.8 1.4 V11.8 C3 10.8 6 10.8 8.5 12.4 C11 10.8 14 10.8 16.2 11.8 V1.4 C14 0.4 11 0.4 8.5 2Z M8.5 2 V12.4" fill="none" stroke="#555" stroke-width="1.2" stroke-linecap="round" stroke-linejoin="round"/></svg>
<svg style="left:1219.92px;top:841.24px;" width="12" height="13" viewBox="0 0 12 13"><path d="M1 1 L11 6.5 L1 12Z" fill="#fff"/></svg>
<svg style="left:1245.48px;top:846.75px;" width="6" height="4" viewBox="0 0 6 4"><path d="M0.3 0.5 L5.7 0.5 L3 3.6Z" fill="#777"/></svg>
<svg style="left:1294.2px;top:846.75px;" width="6" height="4" viewBox="0 0 6 4"><path d="M0.3 0.5 L5.7 0.5 L3 3.6Z" fill="#777"/></svg>
<svg style="left:1310.5px;top:846.74px;" width="13" height="3" viewBox="0 0 13 3"><path d="M0 1.5 H13" stroke="#444" stroke-width="1.8"/></svg>
<svg style="left:1481.5px;top:838.24px;" width="13" height="20" viewBox="0 0 13 20"><path d="M6.5 3 V17 M0.3 10 H12.7" stroke="#444" stroke-width="1.7" fill="none"/></svg>
<svg style="left:1507.3px;top:841.74px;" width="13" height="13" viewBox="0 0 13 13"><path d="M0.8 4 V2.4 Q0.8 0.8 2.4 0.8 H4 M9 0.8 H10.6 Q12.2 0.8 12.2 2.4 V4 M12.2 9 V10.6 Q12.2 12.2 10.6 12.2 H9 M4 12.2 H2.4 Q0.8 12.2 0.8 10.6 V9" fill="none" stroke="#555" stroke-width="1.2" stroke-linecap="round" stroke-linejoin="round"/><circle cx="6.5" cy="6.5" r="1.3" fill="#666"/></svg>
<svg style="left:1277.64px;top:156.91px;" width="6" height="4" viewBox="0 0 6 4"><path d="M0.3 0.5 L5.7 0.5 L3 3.6Z" fill="#666"/></svg>
<svg style="left:1425.54px;top:150.89px;" width="15" height="14" viewBox="0 0 15 14"><path d="M2.4 0.8 H12.6 Q14.2 0.8 14.2 2.4 V8 Q14.2 9.6 12.6 9.6 H7 L4.4 12.6 V9.6 H2.4 Q0.8 9.6 0.8 8 V2.4 Q0.8 0.8 2.4 0.8Z" fill="none" stroke="#8a8a8a" stroke-width="1.1" stroke-linecap="round" stroke-linejoin="round"/><circle cx="4.6" cy="5.2" r="0.8" fill="#8a8a8a"/><circle cx="7.5" cy="5.2" r="0.8" fill="#8a8a8a"/><circle cx="10.4" cy="5.2" r="0.8" fill="#8a8a8a"/></svg>
<svg style="left:1448.84px;top:151.05px;" width="14" height="13" viewBox="0 0 14 13"><rect x="0.8" y="6" width="12.4" height="6.2" rx="1.4" fill="none" stroke="#8aa0c8" stroke-width="1.2" stroke-linecap="round" stroke-linejoin="round"/><path d="M3.4 6 C3.4 -0.8 10.6 -0.8 10.6 6" fill="none" stroke="#8aa0c8" stroke-width="1.2" stroke-linecap="round" stroke-linejoin="round"/></svg>
<svg style="left:1472.9px;top:151.89px;" width="11" height="12" viewBox="0 0 11 12"><path d="M0.8 1 L10.2 11 M10.2 1 L0.8 11" fill="none" stroke="#8aa0c8" stroke-width="1.2" stroke-linecap="round" stroke-linejoin="round"/></svg>
<svg style="left:1464.9px;top:179.85px;" width="15" height="13" viewBox="0 0 15 13"><path d="M12.6 4.6 C10.4 -0.6 2.4 0.4 1.4 6 C0.6 11 7 14 11.4 10.4 M13.4 0.8 V5 H9.6" fill="none" stroke="#9a9a9a" stroke-width="1.1" stroke-linecap="round" stroke-linejoin="round"/></svg>
<svg style="left:1256.12px;top:260.32px;" width="14" height="12" viewBox="0 0 14 12"><path d="M0.8 2.4 V0.8 H8.2 V2.4 M4.5 0.8 V10.6 M3 10.8 H6" fill="none" stroke="#8aa0c0" stroke-width="1.1" stroke-linecap="round" stroke-linejoin="round"/><path d="M7 6.8 V5.6 H13 V6.8 M10 5.6 V11 M9 11.2 H11" fill="none" stroke="#8aa0c0" stroke-width="0.9" stroke-linecap="round" stroke-linejoin="round"/></svg>
<svg style="left:1265.72px;top:311.48px;" width="14" height="12" viewBox="0 0 14 12"><path d="M0.8 2.4 V0.8 H8.2 V2.4 M4.5 0.8 V10.6 M3 10.8 H6" fill="none" stroke="#8aa0c0" stroke-width="1.1" stroke-linecap="round" stroke-linejoin="round"/><path d="M7 6.8 V5.6 H13 V6.8 M10 5.6 V11 M9 11.2 H11" fill="none" stroke="#8aa0c0" stroke-width="0.9" stroke-linecap="round" stroke-linejoin="round"/></svg>
<svg style="left:1504.7px;top:154.36px;" width="17" height="3" viewBox="0 0 17 3"><path d="M0 1.5 H17" stroke="#cfcfcf" stroke-width="2"/></svg>
<svg style="left:1505.2px;top:179.53px;" width="16" height="15" viewBox="0 0 16 15"><path d="M0.8 2.4 H15.2 M0.8 7.5 H15.2 M0.8 12.6 H15.2" fill="none" stroke="#555" stroke-width="1.2" stroke-linecap="round" stroke-linejoin="round"/><circle cx="11" cy="2.4" r="1.7" fill="#e9e9e9" stroke="#555" stroke-width="1.1" stroke-linecap="round" stroke-linejoin="round"/><circle cx="5" cy="7.5" r="1.7" fill="#e9e9e9" stroke="#555" stroke-width="1.1" stroke-linecap="round" stroke-linejoin="round"/><circle cx="11" cy="12.6" r="1.7" fill="#e9e9e9" stroke="#555" stroke-width="1.1" stroke-linecap="round" stroke-linejoin="round"/></svg>
<svg style="left:1505.2px;top:214.27px;" width="16" height="16" viewBox="0 0 16 16"><path d="M8 0.8 L10.2 5.4 L15.2 6 L11.6 9.6 L12.6 14.8 L8 12.2 L3.4 14.8 L4.4 9.6 L0.8 6 L5.8 5.4Z" fill="none" stroke="#555" stroke-width="1.1" stroke-dasharray="3 1.2"/></svg>
<svg style="left:1504.7px;top:251.36px;" width="17" height="15" viewBox="0 0 17 15"><rect x="0.8" y="0.8" width="10" height="7.4" rx="1.4" fill="none" stroke="#555" stroke-width="1.2" stroke-linecap="round" stroke-linejoin="round"/><rect x="6" y="6.8" width="10" height="7.4" rx="1.4" fill="#e9e9e9" stroke="#555" stroke-width="1.2" stroke-linecap="round" stroke-linejoin="round"/><path d="M2.4 11.4 L0.8 9.8 M2.4 11.4 L4 9.8" fill="none" stroke="#555" stroke-width="1" stroke-linecap="round" stroke-linejoin="round"/></svg>
<svg style="left:1505.68px;top:287.44px;" width="16" height="14" viewBox="0 0 16 14"><path d="M1 3.6 V1 H15 V3.6 M8 1 V12.6 M5 13 H11" stroke="#333" stroke-width="1.5" fill="none"/></svg>
<svg style="left:1505.7px;top:806.52px;" width="15" height="14" viewBox="0 0 15 14"><rect x="0.8" y="0.8" width="5.4" height="5" rx="1.6" fill="none" stroke="#666" stroke-width="1.1" stroke-linecap="round" stroke-linejoin="round"/><rect x="8.8" y="0.8" width="5.4" height="5" rx="1.6" fill="none" stroke="#666" stroke-width="1.1" stroke-linecap="round" stroke-linejoin="round"/><rect x="0.8" y="8.2" width="5.4" height="5" rx="1.6" fill="none" stroke="#666" stroke-width="1.1" stroke-linecap="round" stroke-linejoin="round"/><rect x="8.8" y="8.2" width="5.4" height="5" rx="1.6" fill="none" stroke="#666" stroke-width="1.1" stroke-linecap="round" stroke-linejoin="round"/></svg>
<svg style="left:1438.28px;top:757.86px;" width="50" height="51" viewBox="0 0 50 51"><defs><clipPath id="av"><ellipse cx="25" cy="25.5" rx="22.4" ry="22.8"/></clipPath></defs><ellipse cx="25" cy="26.5" rx="24.8" ry="24.6" fill="rgba(0,0,0,.25)"/><ellipse cx="25" cy="25.5" rx="24.6" ry="25" fill="#fff"/><g clip-path="url(#av)"><rect x="0" y="0" width="50" height="51" fill="#e83a34"/><path d="M0 30 L12 24 L25 40 L38 24 L50 30 V51 H0Z" fill="#7cc0ea"/><path d="M14 16 C14 6 36 6 36 16 V26 L30 34 H20 L14 26Z" fill="#fff"/><path d="M12.5 17 C12 4 38 4 37.5 17 L36 20 C35 13 31 12 29 12 C24 12 22 15 14 16Z" fill="#222"/><path d="M17 20 L21 18.6 M29 18.6 L33 20" stroke="#333" stroke-width="1" fill="none"/><path d="M17 34 L25 50 L33 34 L29 30 H21Z" fill="#fff"/><path d="M14 40 H36 L32 51 H18Z" fill="#e83a34"/><path d="M18 46 C21 42 29 42 32 46 L30 50 H20Z" fill="#f6c21c"/></g></svg>
<svg style="left:1514.06px;top:773.84px;" width="17" height="17" viewBox="0 0 17 17"><path d="M8.5 0.6 L10.2 0.8 L10.8 3 L12.6 3.8 L14.6 2.6 L15.9 4 L14.8 6 L15.5 7.6 L17 8 L17 9.8 L15.4 10.4 L14.8 12 L15.8 13.8 L14.4 15.2 L12.6 14.2 L10.8 14.9 L10.2 16.8 L8.4 16.9 L7.6 14.9 L5.8 14.3 L4 15.3 L2.6 14 L3.5 12 L2.8 10.4 L0.8 9.9 L0.8 8 L2.7 7.4 L3.4 5.8 L2.5 4 L3.9 2.6 L5.8 3.7 L7.6 3Z" fill="#fff"/><circle cx="8.9" cy="8.8" r="3" fill="#3a3533"/></svg>
</div></body></html>
